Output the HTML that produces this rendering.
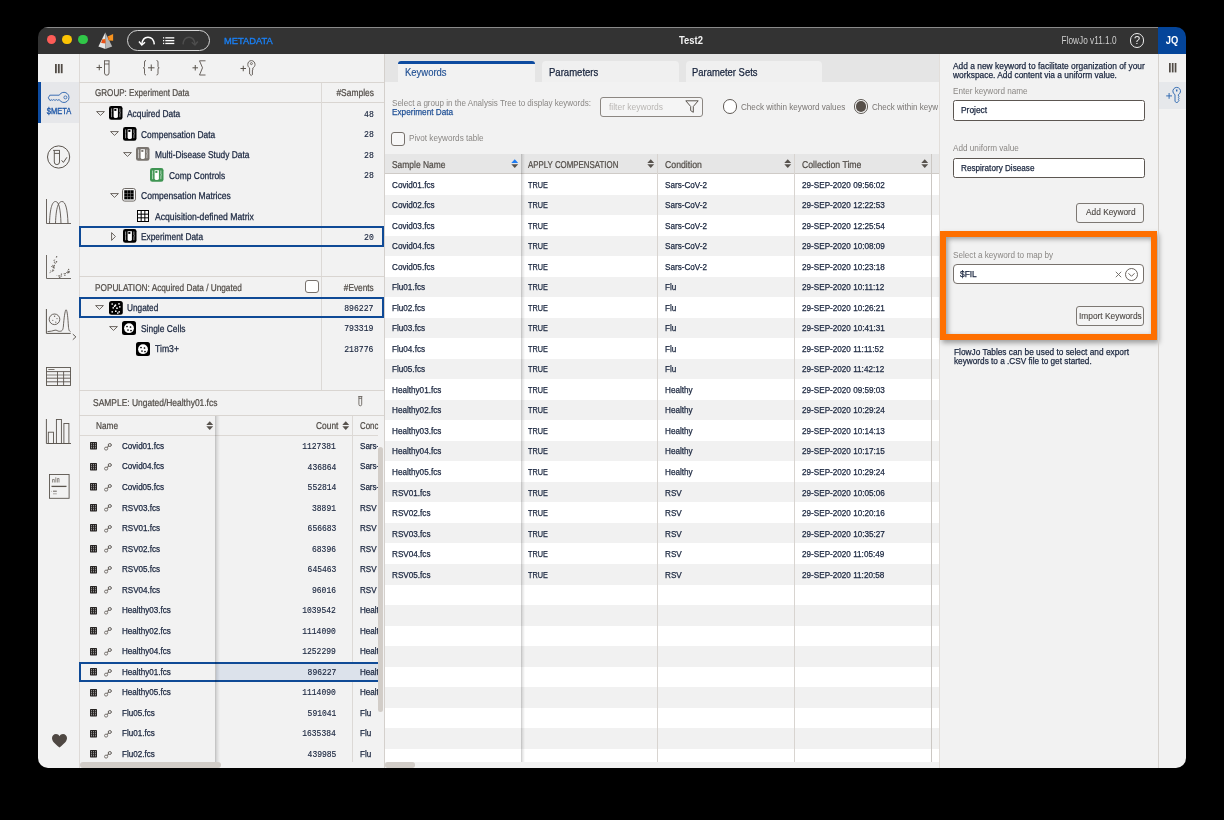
<!DOCTYPE html>
<html><head><meta charset="utf-8">
<style>
*{box-sizing:border-box;margin:0;padding:0}
html,body{width:1224px;height:820px;background:#000;overflow:hidden;font-family:"Liberation Sans",sans-serif}
.a{position:absolute}
.t{position:absolute;white-space:nowrap}
#win{position:absolute;left:0;top:0;width:1224px;height:820px;will-change:transform;clip-path:inset(27px 38px 52px 38px round 10px);background:#f2f2f2}
svg{position:absolute;overflow:visible}
</style></head><body>
<div id="win">

<div class="a" style="left:38.00px;top:27.00px;width:1148.00px;height:27.00px;background:#333333"></div>
<div class="a" style="left:38.00px;top:27.00px;width:1148.00px;height:0.70px;background:#8a8a8a"></div>
<div class="a" style="left:46.50px;top:34.60px;width:9.60px;height:9.60px;background:#fd5c57;border-radius:50%"></div>
<div class="a" style="left:62.20px;top:34.60px;width:9.60px;height:9.60px;background:#fbc404;border-radius:50%"></div>
<div class="a" style="left:78.00px;top:34.60px;width:9.60px;height:9.60px;background:#30c748;border-radius:50%"></div>
<svg style="left:97.00px;top:31.00px" width="18" height="19" viewBox="0 0 18 19"><polygon points="8.3,1.4 1.4,15.6 8.3,18.1" fill="#e6e6e6"/><polygon points="8.3,1.4 8.3,18.1 15.2,15.6" fill="#b5b5b5"/>
<polygon points="10.7,5.5 16.1,3 16.1,9.7 11.8,9.5" fill="#f7931e"/><polygon points="10.7,5.5 12.5,7 11.8,9.5" fill="#f25c05"/><polygon points="5.2,8.5 8.3,7.8 8.3,12.2 4.4,12" fill="#f36f0d"/><polygon points="5.2,8.5 8.3,9.8 8.3,12.2 4.4,12" fill="#e8501a"/></svg>
<div class="a" style="left:126.90px;top:29.80px;width:82.80px;height:21.20px;border:1.2px solid #d6d6d6;border-radius:10.6px"></div>
<svg style="left:138.00px;top:36.00px" width="18" height="10" viewBox="0 0 18 10"><path d="M3.8 8.5 C4.2 3.5 7 1.2 10 1.2 C13.2 1.2 15.8 3.5 16.3 8.3" fill="none" stroke="#fff" stroke-width="1.5"/><path d="M1 5.6 L3.8 9 L7 6.2" fill="none" stroke="#fff" stroke-width="1.5"/></svg>
<svg style="left:162.60px;top:37.00px" width="12" height="8" viewBox="0 0 12 8"><rect x="0" y="0.2" width="1.2" height="1.3" fill="#fff"/><rect x="2.3" y="0.2" width="9" height="1.3" fill="#fff"/><rect x="0" y="3.0" width="1.2" height="1.3" fill="#fff"/><rect x="2.3" y="3.0" width="9" height="1.3" fill="#fff"/><rect x="0" y="5.8" width="1.2" height="1.3" fill="#fff"/><rect x="2.3" y="5.8" width="9" height="1.3" fill="#fff"/></svg>
<svg style="left:182.30px;top:36.00px" width="17" height="10" viewBox="0 0 17 10"><path d="M1 8.3 C1.5 3.5 4 1.2 7 1.2 C10 1.2 12.6 3.5 13 8.5" fill="none" stroke="#4d4d4d" stroke-width="1.5"/><path d="M9.8 6.2 L13 9 L15.8 5.6" fill="none" stroke="#4d4d4d" stroke-width="1.5"/></svg>
<div class="t" id="a0" style="left:223.50px;top:35.97px;font-size:9.2px;line-height:10.58px;color:#1a7ff2;font-weight:normal;font-family:'Liberation Sans',sans-serif;transform:scale(1.0130,1);transform-origin:0 0;-webkit-text-stroke:0.35px #1a7ff2;">METADATA</div>
<div class="t" id="a1" style="left:679.10px;top:35.05px;font-size:10px;line-height:11.50px;color:#f2f2f2;font-weight:bold;font-family:'Liberation Sans',sans-serif;transform:scale(0.9399,1);transform-origin:0 0;">Test2</div>
<div class="t" id="a2" style="right:107.70px;top:35.15px;font-size:10px;line-height:11.50px;color:#cfcfcf;font-weight:normal;font-family:'Liberation Sans',sans-serif;transform:scale(0.8253,1);transform-origin:100% 0;">FlowJo v11.1.0</div>
<div class="a" style="left:1129.70px;top:33.10px;width:14.60px;height:14.60px;border:1.1px solid #eee;border-radius:50%"></div>
<div class="t" style="left:1137.00px;top:34.45px;font-size:11px;line-height:12.65px;color:#eee;font-weight:normal;font-family:'Liberation Sans',sans-serif;transform:translateX(-50%) scaleX(1);transform-origin:50% 0;">?</div>
<div class="a" style="left:1158.10px;top:27.00px;width:27.90px;height:26.80px;background:#04459a"></div>
<div class="t" id="a3" style="left:1171.90px;top:35.05px;font-size:10px;line-height:11.50px;color:#fff;font-weight:bold;font-family:'Liberation Sans',sans-serif;transform:translateX(-50%) scaleX(0.9338);transform-origin:50% 0;">JQ</div>
<div class="a" style="left:78.60px;top:54.00px;width:0.70px;height:714.00px;background:#dedad7"></div>
<svg style="left:54.80px;top:63.70px" width="8" height="10" viewBox="0 0 8 10"><rect x="0" y="0" width="1.8" height="9.2" fill="#514b45"/><rect x="2.9" y="0" width="1.8" height="9.2" fill="#514b45"/><rect x="5.8" y="0" width="1.8" height="9.2" fill="#514b45"/></svg>
<div class="a" style="left:38.00px;top:82.00px;width:40.50px;height:41.00px;background:#e6e7ea"></div>
<div class="a" style="left:38.00px;top:82.00px;width:3.00px;height:41.00px;background:#0d4ba0"></div>
<svg style="left:46.00px;top:90.00px" width="24" height="14" viewBox="0 0 24 14"><path d="M13.3 5.2 L3.8 5.2 L2.3 7.8 L3.8 10.3 L5 10.3 L5.8 9.6 L6.6 10.3 L7.4 9.6 L8.2 10.3 L9 9.6 L9.8 10.3 L10.6 9.6 L11.4 10.3 L13.3 9.6 A5.1 5.1 0 1 0 13.3 5.2 Z" fill="none" stroke="#2a62ad" stroke-width="0.9" stroke-linejoin="round"/><circle cx="19.4" cy="7.4" r="1.5" fill="none" stroke="#2a62ad" stroke-width="0.8"/></svg>
<div class="t" id="a4" style="left:58.75px;top:107.11px;font-size:8.5px;line-height:9.77px;color:#1d56a6;font-weight:normal;font-family:'Liberation Sans',sans-serif;transform:translateX(-50%) scaleX(0.8813);transform-origin:50% 0;-webkit-text-stroke:0.3px #1d56a6;">$META</div>
<svg style="left:46.00px;top:145.00px" width="25" height="25" viewBox="0 0 25 25"><circle cx="12.6" cy="12" r="11.1" fill="none" stroke="#5a544e" stroke-width="1"/><path d="M7.1 5.4 L13.9 5.4 M8.3 5.4 L8.3 17 Q8.3 19.6 10.9 19.6 Q13.5 19.6 13.5 17 L13.5 5.4 M8.3 8.4 L13.5 8.4" fill="none" stroke="#5a544e" stroke-width="0.95"/><path d="M15.6 15.3 L17.4 17.4 L20.9 12.3" fill="none" stroke="#5a544e" stroke-width="1"/></svg>
<svg style="left:46.00px;top:199.00px" width="26" height="26" viewBox="0 0 26 26"><path d="M0.5 0 L0.5 24.5 L25 24.5" fill="none" stroke="#5a544e" stroke-width="0.9"/><path d="M3.5 24.5 C4 8 6.5 2.5 9.5 2.5 C13 2.5 14.5 10 15 24.5" fill="none" stroke="#5a544e" stroke-width="0.9"/><path d="M9.5 24.5 C10 8 12.5 2.5 16 2.5 C19.5 2.5 21.5 10 22 24.5" fill="none" stroke="#5a544e" stroke-width="0.9"/></svg>
<svg style="left:46.00px;top:255.00px" width="26" height="25" viewBox="0 0 26 25"><path d="M0.5 0 L0.5 23.5 L25 23.5" fill="none" stroke="#6f6a65" stroke-width="1"/><circle cx="8.07" cy="5.22" r="0.56" fill="#6a645e"/><circle cx="7.01" cy="11.88" r="0.64" fill="#6a645e"/><circle cx="9.2" cy="8.4" r="0.51" fill="#6a645e"/><circle cx="4.29" cy="15.47" r="0.4" fill="#6a645e"/><circle cx="7.63" cy="11.26" r="0.61" fill="#6a645e"/><circle cx="8.16" cy="13.11" r="0.56" fill="#6a645e"/><circle cx="10.61" cy="6.78" r="0.52" fill="#6a645e"/><circle cx="7.49" cy="12.49" r="0.67" fill="#6a645e"/><circle cx="8.47" cy="7.19" r="0.68" fill="#6a645e"/><circle cx="5.91" cy="16.25" r="0.43" fill="#6a645e"/><circle cx="3.7" cy="17.87" r="0.46" fill="#6a645e"/><circle cx="6.81" cy="10.36" r="0.55" fill="#6a645e"/><circle cx="8.33" cy="10.45" r="0.68" fill="#6a645e"/><circle cx="7.08" cy="15.56" r="0.41" fill="#6a645e"/><circle cx="7.68" cy="15.32" r="0.55" fill="#6a645e"/><circle cx="6.83" cy="14.74" r="0.55" fill="#6a645e"/><circle cx="10.54" cy="6.81" r="0.7" fill="#6a645e"/><circle cx="10.13" cy="2.18" r="0.4" fill="#6a645e"/><circle cx="8.92" cy="4.74" r="0.37" fill="#6a645e"/><circle cx="8.45" cy="11.99" r="0.47" fill="#6a645e"/><circle cx="6.63" cy="15.92" r="0.7" fill="#6a645e"/><circle cx="9.79" cy="7.11" r="0.36" fill="#6a645e"/><circle cx="8.06" cy="5.36" r="0.4" fill="#6a645e"/><circle cx="10.65" cy="1.69" r="0.69" fill="#6a645e"/><circle cx="4.57" cy="16.91" r="0.53" fill="#6a645e"/><circle cx="5.7" cy="11.55" r="0.57" fill="#6a645e"/><circle cx="22.88" cy="16.28" r="0.6" fill="#6a645e"/><circle cx="13.89" cy="22.6" r="0.53" fill="#6a645e"/><circle cx="19.46" cy="18.56" r="0.55" fill="#6a645e"/><circle cx="10.92" cy="20.45" r="0.37" fill="#6a645e"/><circle cx="18.48" cy="18.37" r="0.47" fill="#6a645e"/><circle cx="20.68" cy="17.4" r="0.37" fill="#6a645e"/><circle cx="20.88" cy="17.61" r="0.51" fill="#6a645e"/><circle cx="18.88" cy="19.1" r="0.46" fill="#6a645e"/><circle cx="15.74" cy="18.99" r="0.48" fill="#6a645e"/><circle cx="22.56" cy="17.47" r="0.61" fill="#6a645e"/><circle cx="15.78" cy="21.57" r="0.43" fill="#6a645e"/><circle cx="12.8" cy="21.08" r="0.39" fill="#6a645e"/><circle cx="14.92" cy="21.37" r="0.5" fill="#6a645e"/><circle cx="22.97" cy="17.59" r="0.58" fill="#6a645e"/><circle cx="22.46" cy="16.85" r="0.39" fill="#6a645e"/><circle cx="18.91" cy="20.28" r="0.64" fill="#6a645e"/><circle cx="13.63" cy="22.28" r="0.57" fill="#6a645e"/><circle cx="21.74" cy="17.5" r="0.45" fill="#6a645e"/><circle cx="21.72" cy="18.05" r="0.5" fill="#6a645e"/><circle cx="15.44" cy="20.4" r="0.4" fill="#6a645e"/><circle cx="13.1" cy="20.76" r="0.7" fill="#6a645e"/><circle cx="18.89" cy="18.41" r="0.43" fill="#6a645e"/><circle cx="21.8" cy="16.14" r="0.53" fill="#6a645e"/><circle cx="14.95" cy="20.51" r="0.37" fill="#6a645e"/><circle cx="18.82" cy="20.04" r="0.37" fill="#6a645e"/><circle cx="22.62" cy="14.4" r="0.66" fill="#6a645e"/><circle cx="23.08" cy="16.48" r="0.61" fill="#6a645e"/><circle cx="13.37" cy="21.96" r="0.53" fill="#6a645e"/><circle cx="17.9" cy="18.71" r="0.47" fill="#6a645e"/><circle cx="15.37" cy="19.24" r="0.62" fill="#6a645e"/></svg>
<svg style="left:46.00px;top:309.00px" width="32" height="32" viewBox="0 0 32 32"><path d="M0.4 0 L0.4 24.4 L24.7 24.4" fill="none" stroke="#5a544e" stroke-width="1"/><circle cx="8.5" cy="10.3" r="5.3" fill="none" stroke="#5a544e" stroke-width="0.9"/><circle cx="8.6" cy="7.3" r="0.7" fill="#6a645e"/><circle cx="11" cy="9.6" r="0.6" fill="#6a645e"/><circle cx="6.8" cy="11.3" r="0.6" fill="#6a645e"/><circle cx="9.8" cy="13.2" r="0.6" fill="#6a645e"/><path d="M1.5 22.6 C4 22.4 7 22 9 21.2 C10.5 20.6 11.5 22.4 13.5 22.3 C16 22.2 17 21.5 17.4 17 C17.9 10 19 0.8 20.1 0.8 C21.2 0.8 22 10 22.4 17 C22.7 21 23.2 22.2 24.5 22.6" fill="none" stroke="#5a544e" stroke-width="0.9"/><path d="M26.8 25.1 L29.9 27.9 L26.8 30.7" fill="none" stroke="#5a544e" stroke-width="0.95"/></svg>
<svg style="left:46.00px;top:367.00px" width="25" height="19" viewBox="0 0 25 19"><rect x="0.5" y="0.5" width="24" height="18" fill="none" stroke="#5a544e" stroke-width="0.9"/><path d="M0.5 4.6 L24.5 4.6 M0.5 11.2 L24.5 11.2 M0.5 14.8 L24.5 14.8 M11.5 4.6 L11.5 18.5 M17.6 4.6 L17.6 18.5" stroke="#5a544e" stroke-width="0.9" fill="none"/><path d="M0.5 8 L24.5 8" stroke="#5a544e" stroke-width="0.7" fill="none"/><path d="M2.3 2.5 L8.5 2.5" stroke="#5a544e" stroke-width="0.8"/></svg>
<svg style="left:46.00px;top:419.00px" width="26" height="26" viewBox="0 0 26 26"><path d="M0.4 0 L0.4 24.5 L25 24.5" fill="none" stroke="#5a544e" stroke-width="0.95"/><rect x="2.3" y="13.2" width="5.2" height="11.3" fill="none" stroke="#5a544e" stroke-width="0.9"/><rect x="10.4" y="0.5" width="5" height="24" fill="none" stroke="#5a544e" stroke-width="0.9"/><rect x="17.9" y="4.5" width="5" height="20" fill="none" stroke="#5a544e" stroke-width="0.9"/></svg>
<svg style="left:48.50px;top:473.50px" width="21" height="25" viewBox="0 0 21 25"><rect x="0.5" y="0.5" width="19.6" height="23.8" fill="none" stroke="#5a544e" stroke-width="0.9"/><path d="M3.5 8.5 L3.5 5.5 L5.3 5.5 L5.3 8.5 M6.8 8.5 L6.8 3.3 M8.4 8.5 L8.4 4.5 L10 4.5 L10 8.5" stroke="#6a645e" stroke-width="0.7" fill="none"/><path d="M2.5 12.4 L17.5 12.4" stroke="#5a544e" stroke-width="1.3"/><path d="M4 17.2 L7.8 17.2" stroke="#5a544e" stroke-width="0.9"/><path d="M4 19.8 L7.8 19.8" stroke="#77716c" stroke-width="0.6"/><circle cx="2.6" cy="17.2" r="0.35" fill="#5a544e"/></svg>
<svg style="left:51.50px;top:734.00px" width="15" height="14" viewBox="0 0 15 14"><path d="M7.5 13.5 C2 9 0 7 0 4 C0 1.8 1.8 0 4 0 C5.6 0 6.8 0.9 7.5 2.2 C8.2 0.9 9.4 0 11 0 C13.2 0 15 1.8 15 4 C15 7 13 9 7.5 13.5 Z" fill="#4f4843"/></svg>
<svg style="left:96.00px;top:60.00px" width="15" height="16" viewBox="0 0 15 16"><path d="M0.5 7.5 L6 7.5 M3.25 4.75 L3.25 10.25" stroke="#5a544e" stroke-width="1"/><path d="M8 0.8 L13.5 0.8 M8.5 0.8 L8.5 13 Q8.5 15.2 10.75 15.2 Q13 15.2 13 13 L13 0.8 M8.5 4 L13 4" fill="none" stroke="#5a544e" stroke-width="0.9"/></svg>
<svg style="left:143.00px;top:60.00px" width="17" height="16" viewBox="0 0 17 16"><path d="M3 0.5 Q1.5 0.5 1.5 2 L1.5 6.5 Q1.5 7.8 0.3 7.8 Q1.5 7.8 1.5 9 L1.5 13.5 Q1.5 15 3 15" fill="none" stroke="#5a544e" stroke-width="0.9"/><path d="M13.5 0.5 Q15 0.5 15 2 L15 6.5 Q15 7.8 16.2 7.8 Q15 7.8 15 9 L15 13.5 Q15 15 13.5 15" fill="none" stroke="#5a544e" stroke-width="0.9"/><path d="M5 7.8 L11.5 7.8 M8.25 4.5 L8.25 11" stroke="#5a544e" stroke-width="1"/></svg>
<svg style="left:192.00px;top:60.00px" width="15" height="16" viewBox="0 0 15 16"><path d="M0.5 7.8 L6 7.8 M3.25 5 L3.25 10.5" stroke="#5a544e" stroke-width="1"/><path d="M13.5 0.8 L7.5 0.8 L10.5 7.8 L7.5 15 L13.5 15" fill="none" stroke="#5a544e" stroke-width="0.9"/></svg>
<svg style="left:240.00px;top:60.00px" width="16" height="16" viewBox="0 0 16 16"><path d="M0.5 8.5 L6 8.5 M3.25 5.75 L3.25 11.25" stroke="#5a544e" stroke-width="1"/><path d="M11.5 0.6 C9 0.6 7.8 2.5 7.8 4.5 C7.8 6.2 8.6 7.3 9.6 8 L9.6 14 L11.3 15.5 L12.8 14 L12 13 L12.8 12 L12 11 L12.8 10 L12.8 8 C14 7.3 15 6.2 15 4.5 C15 2.5 13.6 0.6 11.5 0.6 Z" fill="none" stroke="#5a544e" stroke-width="0.9"/><circle cx="11.4" cy="3.6" r="1" fill="none" stroke="#5a544e" stroke-width="0.8"/></svg>
<div class="a" style="left:79.30px;top:82.00px;width:305.10px;height:0.80px;background:#d9d5d1"></div>
<div class="t" id="a5" style="left:94.50px;top:88.14px;font-size:9.9px;line-height:11.38px;color:#4f4a45;font-weight:normal;font-family:'Liberation Sans',sans-serif;transform:scale(0.8173,1);transform-origin:0 0;-webkit-text-stroke:0.22px #4f4a45;text-rendering:geometricPrecision;">GROUP: Experiment Data</div>
<div class="t" id="a6" style="right:850.40px;top:88.14px;font-size:9.9px;line-height:11.38px;color:#4f4a45;font-weight:normal;font-family:'Liberation Sans',sans-serif;transform:scale(0.8541,1);transform-origin:100% 0;-webkit-text-stroke:0.22px #4f4a45;text-rendering:geometricPrecision;">#Samples</div>
<div class="a" style="left:79.30px;top:101.90px;width:305.10px;height:0.80px;background:#d9d5d1"></div>
<div class="a" style="left:321.00px;top:82.80px;width:0.80px;height:193.80px;background:#dcd9d6"></div>
<svg style="left:95.90px;top:110.60px" width="9" height="5" viewBox="0 0 9 5"><path d="M0.6 0.6 L8.4 0.6 L4.5 4.4 Z" fill="#f4f4f4" stroke="#5a544e" stroke-width="0.9" stroke-linejoin="round"/></svg>
<svg style="left:109.00px;top:106.30px" width="14" height="14" viewBox="0 0 14 14"><rect x="0" y="0" width="13.5" height="13.7" rx="2.3" fill="#000"/>
<path d="M4.6 2.2 L8.9 2.2 L8.9 10.5 Q8.9 12 6.75 12 Q4.6 12 4.6 10.5 Z" fill="#fff"/><rect x="5.3" y="3" width="2.1" height="1.9" fill="#000"/>
<path d="M2.6 2.5 L2.6 6.3 L2 6.85 L2.6 7.4 L2.6 11.2 M10.9 2.5 L10.9 6.3 L11.5 6.85 L10.9 7.4 L10.9 11.2" fill="none" stroke="#fff" stroke-width="0.6"/></svg>
<div class="t" id="a7" style="left:127.40px;top:109.24px;font-size:9.9px;line-height:11.38px;color:#18243d;font-weight:normal;font-family:'Liberation Sans',sans-serif;transform:scale(0.8503,1);transform-origin:0 0;-webkit-text-stroke:0.25px #18243d;text-rendering:geometricPrecision;">Acquired Data</div>
<svg style="left:109.60px;top:131.10px" width="9" height="5" viewBox="0 0 9 5"><path d="M0.6 0.6 L8.4 0.6 L4.5 4.4 Z" fill="#f4f4f4" stroke="#5a544e" stroke-width="0.9" stroke-linejoin="round"/></svg>
<svg style="left:122.60px;top:126.90px" width="14" height="14" viewBox="0 0 14 14"><rect x="0" y="0" width="13.5" height="13.7" rx="2.3" fill="#000"/>
<path d="M4.6 2.2 L8.9 2.2 L8.9 10.5 Q8.9 12 6.75 12 Q4.6 12 4.6 10.5 Z" fill="#fff"/><rect x="5.3" y="3" width="2.1" height="1.9" fill="#000"/>
<path d="M2.6 2.5 L2.6 6.3 L2 6.85 L2.6 7.4 L2.6 11.2 M10.9 2.5 L10.9 6.3 L11.5 6.85 L10.9 7.4 L10.9 11.2" fill="none" stroke="#fff" stroke-width="0.6"/></svg>
<div class="t" id="a8" style="left:141.20px;top:129.74px;font-size:9.9px;line-height:11.38px;color:#18243d;font-weight:normal;font-family:'Liberation Sans',sans-serif;transform:scale(0.8502,1);transform-origin:0 0;-webkit-text-stroke:0.25px #18243d;text-rendering:geometricPrecision;">Compensation Data</div>
<svg style="left:123.30px;top:151.60px" width="9" height="5" viewBox="0 0 9 5"><path d="M0.6 0.6 L8.4 0.6 L4.5 4.4 Z" fill="#f4f4f4" stroke="#5a544e" stroke-width="0.9" stroke-linejoin="round"/></svg>
<svg style="left:136.00px;top:147.40px" width="14" height="14" viewBox="0 0 14 14"><rect x="0" y="0" width="13.5" height="13.7" rx="2.3" fill="#7a7570"/>
<path d="M4.6 2.2 L8.9 2.2 L8.9 10.5 Q8.9 12 6.75 12 Q4.6 12 4.6 10.5 Z" fill="#fff"/><rect x="5.3" y="3" width="2.1" height="1.9" fill="#7a7570"/>
<path d="M2.6 2.5 L2.6 6.3 L2 6.85 L2.6 7.4 L2.6 11.2 M10.9 2.5 L10.9 6.3 L11.5 6.85 L10.9 7.4 L10.9 11.2" fill="none" stroke="#fff" stroke-width="0.6"/></svg>
<div class="t" id="a9" style="left:154.80px;top:150.24px;font-size:9.9px;line-height:11.38px;color:#18243d;font-weight:normal;font-family:'Liberation Sans',sans-serif;transform:scale(0.8473,1);transform-origin:0 0;-webkit-text-stroke:0.25px #18243d;text-rendering:geometricPrecision;">Multi-Disease Study Data</div>
<svg style="left:150.00px;top:168.00px" width="14" height="14" viewBox="0 0 14 14"><rect x="0" y="0" width="13.5" height="13.7" rx="2.3" fill="#3f9553"/>
<path d="M4.6 2.2 L8.9 2.2 L8.9 10.5 Q8.9 12 6.75 12 Q4.6 12 4.6 10.5 Z" fill="#fff"/><rect x="5.3" y="3" width="2.1" height="1.9" fill="#3f9553"/>
<path d="M2.6 2.5 L2.6 6.3 L2 6.85 L2.6 7.4 L2.6 11.2 M10.9 2.5 L10.9 6.3 L11.5 6.85 L10.9 7.4 L10.9 11.2" fill="none" stroke="#fff" stroke-width="0.6"/></svg>
<div class="t" id="a10" style="left:168.60px;top:170.74px;font-size:9.9px;line-height:11.38px;color:#18243d;font-weight:normal;font-family:'Liberation Sans',sans-serif;transform:scale(0.8535,1);transform-origin:0 0;-webkit-text-stroke:0.25px #18243d;text-rendering:geometricPrecision;">Comp Controls</div>
<svg style="left:109.60px;top:192.60px" width="9" height="5" viewBox="0 0 9 5"><path d="M0.6 0.6 L8.4 0.6 L4.5 4.4 Z" fill="#f4f4f4" stroke="#5a544e" stroke-width="0.9" stroke-linejoin="round"/></svg>
<svg style="left:122.00px;top:188.40px" width="14" height="14" viewBox="0 0 14 14"><rect x="0.5" y="0.5" width="13" height="12.6" rx="2.2" fill="#f7f7f7" stroke="#6f6a66" stroke-width="1"/><rect x="2.1" y="2.1" width="9.8" height="9.4" fill="#9a9a9a"/><rect x="2.40" y="2.40" width="2.75" height="2.65" fill="#000"/><rect x="5.55" y="2.40" width="2.75" height="2.65" fill="#000"/><rect x="8.70" y="2.40" width="2.75" height="2.65" fill="#000"/><rect x="2.40" y="5.45" width="2.75" height="2.65" fill="#000"/><rect x="5.55" y="5.45" width="2.75" height="2.65" fill="#000"/><rect x="8.70" y="5.45" width="2.75" height="2.65" fill="#000"/><rect x="2.40" y="8.50" width="2.75" height="2.65" fill="#000"/><rect x="5.55" y="8.50" width="2.75" height="2.65" fill="#000"/><rect x="8.70" y="8.50" width="2.75" height="2.65" fill="#000"/></svg>
<div class="t" id="a11" style="left:141.20px;top:191.24px;font-size:9.9px;line-height:11.38px;color:#18243d;font-weight:normal;font-family:'Liberation Sans',sans-serif;transform:scale(0.8659,1);transform-origin:0 0;-webkit-text-stroke:0.25px #18243d;text-rendering:geometricPrecision;">Compensation Matrices</div>
<svg style="left:137.00px;top:210.00px" width="12" height="12" viewBox="0 0 12 12"><rect x="0.5" y="0.5" width="11" height="11" fill="#fff" stroke="#000" stroke-width="1"/><path d="M4.17 0.5 L4.17 11.5 M7.83 0.5 L7.83 11.5 M0.5 4.17 L11.5 4.17 M0.5 7.83 L11.5 7.83" stroke="#000" stroke-width="1"/></svg>
<div class="t" id="a12" style="left:154.80px;top:211.74px;font-size:9.9px;line-height:11.38px;color:#18243d;font-weight:normal;font-family:'Liberation Sans',sans-serif;transform:scale(0.8739,1);transform-origin:0 0;-webkit-text-stroke:0.25px #18243d;text-rendering:geometricPrecision;">Acquisition-defined Matrix</div>
<svg style="left:110.90px;top:232.00px" width="5" height="9" viewBox="0 0 5 9"><path d="M0.6 0.6 L0.6 8.4 L4.4 4.5 Z" fill="#f4f4f4" stroke="#5a544e" stroke-width="0.9" stroke-linejoin="round"/></svg>
<svg style="left:122.60px;top:229.30px" width="14" height="14" viewBox="0 0 14 14"><rect x="0" y="0" width="13.5" height="13.7" rx="2.3" fill="#000"/>
<path d="M4.6 2.2 L8.9 2.2 L8.9 10.5 Q8.9 12 6.75 12 Q4.6 12 4.6 10.5 Z" fill="#fff"/><rect x="5.3" y="3" width="2.1" height="1.9" fill="#000"/>
<path d="M2.6 2.5 L2.6 6.3 L2 6.85 L2.6 7.4 L2.6 11.2 M10.9 2.5 L10.9 6.3 L11.5 6.85 L10.9 7.4 L10.9 11.2" fill="none" stroke="#fff" stroke-width="0.6"/></svg>
<div class="t" id="a13" style="left:141.20px;top:232.24px;font-size:9.9px;line-height:11.38px;color:#18243d;font-weight:normal;font-family:'Liberation Sans',sans-serif;transform:scale(0.8431,1);transform-origin:0 0;-webkit-text-stroke:0.25px #18243d;text-rendering:geometricPrecision;">Experiment Data</div>
<div class="t" style="right:850.70px;top:109.96px;font-size:9px;line-height:10.35px;color:#18243d;font-weight:normal;font-family:'Liberation Mono',monospace;transform:scale(0.9,1);transform-origin:100% 0;-webkit-text-stroke:0.15px #18243d;">48</div>
<div class="t" style="right:850.70px;top:130.45px;font-size:9px;line-height:10.35px;color:#18243d;font-weight:normal;font-family:'Liberation Mono',monospace;transform:scale(0.9,1);transform-origin:100% 0;-webkit-text-stroke:0.15px #18243d;">28</div>
<div class="t" style="right:850.70px;top:150.95px;font-size:9px;line-height:10.35px;color:#18243d;font-weight:normal;font-family:'Liberation Mono',monospace;transform:scale(0.9,1);transform-origin:100% 0;-webkit-text-stroke:0.15px #18243d;">28</div>
<div class="t" style="right:850.70px;top:171.45px;font-size:9px;line-height:10.35px;color:#18243d;font-weight:normal;font-family:'Liberation Mono',monospace;transform:scale(0.9,1);transform-origin:100% 0;-webkit-text-stroke:0.15px #18243d;">28</div>
<div class="t" style="right:850.70px;top:232.95px;font-size:9px;line-height:10.35px;color:#18243d;font-weight:normal;font-family:'Liberation Mono',monospace;transform:scale(0.9,1);transform-origin:100% 0;-webkit-text-stroke:0.15px #18243d;">20</div>
<div class="a" style="left:79.10px;top:226.00px;width:305.30px;height:20.90px;border:2px solid #0f4a96;border-left-width:2.7px"></div>
<div class="a" style="left:79.30px;top:276.30px;width:305.10px;height:0.80px;background:#d9d5d1"></div>
<div class="t" id="a14" style="left:94.80px;top:282.64px;font-size:9.9px;line-height:11.38px;color:#4f4a45;font-weight:normal;font-family:'Liberation Sans',sans-serif;transform:scale(0.8346,1);transform-origin:0 0;-webkit-text-stroke:0.22px #4f4a45;text-rendering:geometricPrecision;">POPULATION: Acquired Data / Ungated</div>
<div class="a" style="left:305.00px;top:280.30px;width:13.80px;height:13.20px;border:1px solid #77716c;border-radius:3px;background:#fff"></div>
<div class="t" id="a15" style="right:850.50px;top:282.64px;font-size:9.9px;line-height:11.38px;color:#4f4a45;font-weight:normal;font-family:'Liberation Sans',sans-serif;transform:scale(0.8379,1);transform-origin:100% 0;-webkit-text-stroke:0.22px #4f4a45;text-rendering:geometricPrecision;">#Events</div>
<div class="a" style="left:321.00px;top:277.00px;width:0.80px;height:113.60px;background:#dcd9d6"></div>
<div class="a" style="left:79.10px;top:297.40px;width:305.30px;height:20.90px;border:2px solid #0f4a96;border-left-width:2.7px"></div>
<svg style="left:95.00px;top:305.00px" width="9" height="5" viewBox="0 0 9 5"><path d="M0.6 0.6 L8.4 0.6 L4.5 4.4 Z" fill="#f4f4f4" stroke="#5a544e" stroke-width="0.9" stroke-linejoin="round"/></svg>
<svg style="left:108.80px;top:300.50px" width="14" height="14" viewBox="0 0 14 14"><rect x="0" y="0" width="13.8" height="13.8" rx="2.5" fill="#000"/><circle cx="3.2" cy="3" r="0.85" fill="#fff"/><circle cx="6.5" cy="4.2" r="0.85" fill="#fff"/><circle cx="10" cy="2.8" r="0.85" fill="#fff"/><circle cx="4.2" cy="6.8" r="0.85" fill="#fff"/><circle cx="8" cy="7.2" r="0.85" fill="#fff"/><circle cx="10.8" cy="5.8" r="0.85" fill="#fff"/><circle cx="3.2" cy="10.8" r="0.85" fill="#fff"/><circle cx="6.8" cy="10.2" r="0.85" fill="#fff"/><circle cx="10.2" cy="10.8" r="0.85" fill="#fff"/><circle cx="5.6" cy="5.2" r="0.85" fill="#fff"/><circle cx="8.8" cy="12" r="0.85" fill="#fff"/></svg>
<div class="t" id="a16" style="left:127.40px;top:303.04px;font-size:9.9px;line-height:11.38px;color:#18243d;font-weight:normal;font-family:'Liberation Sans',sans-serif;transform:scale(0.8382,1);transform-origin:0 0;-webkit-text-stroke:0.25px #18243d;text-rendering:geometricPrecision;">Ungated</div>
<svg style="left:109.00px;top:325.50px" width="9" height="5" viewBox="0 0 9 5"><path d="M0.6 0.6 L8.4 0.6 L4.5 4.4 Z" fill="#f4f4f4" stroke="#5a544e" stroke-width="0.9" stroke-linejoin="round"/></svg>
<svg style="left:122.00px;top:321.00px" width="14" height="14" viewBox="0 0 14 14"><rect x="0" y="0" width="14" height="14" rx="2.5" fill="#000"/><circle cx="7" cy="7.2" r="4.9" fill="#fff"/><circle cx="5" cy="5.5" r="0.85" fill="#000"/><circle cx="8.5" cy="6" r="0.85" fill="#000"/><circle cx="6" cy="9" r="0.85" fill="#000"/><circle cx="9" cy="9.5" r="0.85" fill="#000"/></svg>
<div class="t" id="a17" style="left:140.80px;top:323.54px;font-size:9.9px;line-height:11.38px;color:#18243d;font-weight:normal;font-family:'Liberation Sans',sans-serif;transform:scale(0.8534,1);transform-origin:0 0;-webkit-text-stroke:0.25px #18243d;text-rendering:geometricPrecision;">Single Cells</div>
<svg style="left:136.00px;top:341.50px" width="14" height="14" viewBox="0 0 14 14"><rect x="0" y="0" width="14" height="14" rx="2.5" fill="#000"/><circle cx="7" cy="7.2" r="4.9" fill="#fff"/><circle cx="5" cy="5.5" r="0.85" fill="#000"/><circle cx="8.5" cy="6" r="0.85" fill="#000"/><circle cx="6" cy="9" r="0.85" fill="#000"/><circle cx="9" cy="9.5" r="0.85" fill="#000"/></svg>
<div class="t" id="a18" style="left:155.00px;top:344.04px;font-size:9.9px;line-height:11.38px;color:#18243d;font-weight:normal;font-family:'Liberation Sans',sans-serif;transform:scale(0.8750,1);transform-origin:0 0;-webkit-text-stroke:0.25px #18243d;text-rendering:geometricPrecision;">Tim3+</div>
<div class="t" style="right:850.70px;top:303.75px;font-size:9px;line-height:10.35px;color:#18243d;font-weight:normal;font-family:'Liberation Mono',monospace;transform:scale(0.9,1);transform-origin:100% 0;-webkit-text-stroke:0.15px #18243d;">896227</div>
<div class="t" style="right:850.70px;top:324.25px;font-size:9px;line-height:10.35px;color:#18243d;font-weight:normal;font-family:'Liberation Mono',monospace;transform:scale(0.9,1);transform-origin:100% 0;-webkit-text-stroke:0.15px #18243d;">793319</div>
<div class="t" style="right:850.70px;top:344.75px;font-size:9px;line-height:10.35px;color:#18243d;font-weight:normal;font-family:'Liberation Mono',monospace;transform:scale(0.9,1);transform-origin:100% 0;-webkit-text-stroke:0.15px #18243d;">218776</div>
<div class="a" style="left:79.30px;top:389.90px;width:305.10px;height:0.80px;background:#d9d5d1"></div>
<div class="t" id="a19" style="left:93.10px;top:397.74px;font-size:9.9px;line-height:11.38px;color:#4f4a45;font-weight:normal;font-family:'Liberation Sans',sans-serif;transform:scale(0.8553,1);transform-origin:0 0;-webkit-text-stroke:0.22px #4f4a45;text-rendering:geometricPrecision;">SAMPLE: Ungated/Healthy01.fcs</div>
<svg style="left:357.60px;top:396.00px" width="5" height="11" viewBox="0 0 5 11"><path d="M0.3 0.5 L4.3 0.5 M0.9 0.5 L0.9 8.3 Q0.9 9.8 2.3 9.8 Q3.7 9.8 3.7 8.3 L3.7 0.5 M0.9 2.3 L3.7 2.3" fill="none" stroke="#5a544e" stroke-width="0.8"/></svg>
<div class="a" style="left:79.30px;top:414.60px;width:305.10px;height:0.80px;background:#d9d5d1"></div>
<div class="t" id="a20" style="left:95.70px;top:420.84px;font-size:9.9px;line-height:11.38px;color:#4f4a45;font-weight:normal;font-family:'Liberation Sans',sans-serif;transform:scale(0.8390,1);transform-origin:0 0;-webkit-text-stroke:0.22px #4f4a45;text-rendering:geometricPrecision;">Name</div>
<svg style="left:205.80px;top:420.90px" width="8" height="10" viewBox="0 0 8 10"><path d="M0.3 4 L3.75 0.2 L7.2 4 Z" fill="#57524d"/><path d="M0.3 5.3 L3.75 9.1 L7.2 5.3 Z" fill="#57524d"/></svg>
<div class="t" id="a21" style="right:885.40px;top:420.94px;font-size:9.9px;line-height:11.38px;color:#4f4a45;font-weight:normal;font-family:'Liberation Sans',sans-serif;transform:scale(0.8463,1);transform-origin:100% 0;-webkit-text-stroke:0.22px #4f4a45;text-rendering:geometricPrecision;">Count</div>
<svg style="left:341.80px;top:420.80px" width="8" height="10" viewBox="0 0 8 10"><path d="M0.3 4 L3.75 0.2 L7.2 4 Z" fill="#57524d"/><path d="M0.3 5.3 L3.75 9.1 L7.2 5.3 Z" fill="#57524d"/></svg>
<div class="t" style="left:360.00px;top:420.84px;font-size:9.9px;line-height:11.38px;color:#4f4a45;font-weight:normal;font-family:'Liberation Sans',sans-serif;transform:scale(0.8,1);transform-origin:0 0;-webkit-text-stroke:0.22px #4f4a45;text-rendering:geometricPrecision;width:22.5px;overflow:hidden;">Conc</div>
<div class="a" style="left:79.30px;top:435.10px;width:299.00px;height:0.80px;background:#dcd8d4"></div>
<div class="a" style="left:352.20px;top:416.00px;width:0.80px;height:346.00px;background:#dcd9d6"></div>
<div class="a" style="left:216.00px;top:661.82px;width:162.40px;height:20.00px;background:#dce2eb"></div>
<svg style="left:89.90px;top:442.40px" width="8" height="8" viewBox="0 0 8 8"><rect x="0" y="0" width="7" height="7.4" rx="0.6" fill="#262322"/><circle cx="1.45" cy="1.65" r="0.5" fill="#e8e8e8"/><circle cx="3.50" cy="1.65" r="0.5" fill="#e8e8e8"/><circle cx="5.55" cy="1.65" r="0.5" fill="#e8e8e8"/><circle cx="1.45" cy="3.70" r="0.5" fill="#e8e8e8"/><circle cx="3.50" cy="3.70" r="0.5" fill="#e8e8e8"/><circle cx="5.55" cy="3.70" r="0.5" fill="#e8e8e8"/><circle cx="1.45" cy="5.75" r="0.5" fill="#e8e8e8"/><circle cx="3.50" cy="5.75" r="0.5" fill="#e8e8e8"/><circle cx="5.55" cy="5.75" r="0.5" fill="#e8e8e8"/></svg>
<svg style="left:103.70px;top:442.80px" width="9" height="8" viewBox="0 0 9 8"><ellipse cx="2.1" cy="5.6" rx="1.6" ry="1.5" fill="none" stroke="#6f6a65" stroke-width="0.9"/><ellipse cx="5.8" cy="2.0" rx="1.6" ry="1.4" fill="none" stroke="#4f4a45" stroke-width="0.9"/><path d="M2.9 4.6 L4.9 2.9" stroke="#6f6a65" stroke-width="1.1"/></svg>
<div class="t" style="left:121.60px;top:440.96px;font-size:9px;line-height:10.35px;color:#18243d;font-weight:normal;font-family:'Liberation Sans',sans-serif;transform:scale(0.896,1);transform-origin:0 0;-webkit-text-stroke:0.25px #18243d;">Covid01.fcs</div>
<div class="t" style="right:888.10px;top:442.16px;font-size:9px;line-height:10.35px;color:#18243d;font-weight:normal;font-family:'Liberation Mono',monospace;transform:scale(0.889,1);transform-origin:100% 0;-webkit-text-stroke:0.15px #18243d;">1127381</div>
<div class="t" style="left:360.00px;top:440.96px;font-size:9px;line-height:10.35px;color:#18243d;font-weight:normal;font-family:'Liberation Sans',sans-serif;transform:scale(0.896,1);transform-origin:0 0;-webkit-text-stroke:0.25px #18243d;width:20px;overflow:hidden;">Sars-</div>
<svg style="left:89.90px;top:462.92px" width="8" height="8" viewBox="0 0 8 8"><rect x="0" y="0" width="7" height="7.4" rx="0.6" fill="#262322"/><circle cx="1.45" cy="1.65" r="0.5" fill="#e8e8e8"/><circle cx="3.50" cy="1.65" r="0.5" fill="#e8e8e8"/><circle cx="5.55" cy="1.65" r="0.5" fill="#e8e8e8"/><circle cx="1.45" cy="3.70" r="0.5" fill="#e8e8e8"/><circle cx="3.50" cy="3.70" r="0.5" fill="#e8e8e8"/><circle cx="5.55" cy="3.70" r="0.5" fill="#e8e8e8"/><circle cx="1.45" cy="5.75" r="0.5" fill="#e8e8e8"/><circle cx="3.50" cy="5.75" r="0.5" fill="#e8e8e8"/><circle cx="5.55" cy="5.75" r="0.5" fill="#e8e8e8"/></svg>
<svg style="left:103.70px;top:463.32px" width="9" height="8" viewBox="0 0 9 8"><ellipse cx="2.1" cy="5.6" rx="1.6" ry="1.5" fill="none" stroke="#6f6a65" stroke-width="0.9"/><ellipse cx="5.8" cy="2.0" rx="1.6" ry="1.4" fill="none" stroke="#4f4a45" stroke-width="0.9"/><path d="M2.9 4.6 L4.9 2.9" stroke="#6f6a65" stroke-width="1.1"/></svg>
<div class="t" style="left:121.60px;top:461.48px;font-size:9px;line-height:10.35px;color:#18243d;font-weight:normal;font-family:'Liberation Sans',sans-serif;transform:scale(0.896,1);transform-origin:0 0;-webkit-text-stroke:0.25px #18243d;">Covid04.fcs</div>
<div class="t" style="right:888.10px;top:462.68px;font-size:9px;line-height:10.35px;color:#18243d;font-weight:normal;font-family:'Liberation Mono',monospace;transform:scale(0.889,1);transform-origin:100% 0;-webkit-text-stroke:0.15px #18243d;">436864</div>
<div class="t" style="left:360.00px;top:461.48px;font-size:9px;line-height:10.35px;color:#18243d;font-weight:normal;font-family:'Liberation Sans',sans-serif;transform:scale(0.896,1);transform-origin:0 0;-webkit-text-stroke:0.25px #18243d;width:20px;overflow:hidden;">Sars-</div>
<svg style="left:89.90px;top:483.44px" width="8" height="8" viewBox="0 0 8 8"><rect x="0" y="0" width="7" height="7.4" rx="0.6" fill="#262322"/><circle cx="1.45" cy="1.65" r="0.5" fill="#e8e8e8"/><circle cx="3.50" cy="1.65" r="0.5" fill="#e8e8e8"/><circle cx="5.55" cy="1.65" r="0.5" fill="#e8e8e8"/><circle cx="1.45" cy="3.70" r="0.5" fill="#e8e8e8"/><circle cx="3.50" cy="3.70" r="0.5" fill="#e8e8e8"/><circle cx="5.55" cy="3.70" r="0.5" fill="#e8e8e8"/><circle cx="1.45" cy="5.75" r="0.5" fill="#e8e8e8"/><circle cx="3.50" cy="5.75" r="0.5" fill="#e8e8e8"/><circle cx="5.55" cy="5.75" r="0.5" fill="#e8e8e8"/></svg>
<svg style="left:103.70px;top:483.84px" width="9" height="8" viewBox="0 0 9 8"><ellipse cx="2.1" cy="5.6" rx="1.6" ry="1.5" fill="none" stroke="#6f6a65" stroke-width="0.9"/><ellipse cx="5.8" cy="2.0" rx="1.6" ry="1.4" fill="none" stroke="#4f4a45" stroke-width="0.9"/><path d="M2.9 4.6 L4.9 2.9" stroke="#6f6a65" stroke-width="1.1"/></svg>
<div class="t" style="left:121.60px;top:482.00px;font-size:9px;line-height:10.35px;color:#18243d;font-weight:normal;font-family:'Liberation Sans',sans-serif;transform:scale(0.896,1);transform-origin:0 0;-webkit-text-stroke:0.25px #18243d;">Covid05.fcs</div>
<div class="t" style="right:888.10px;top:483.20px;font-size:9px;line-height:10.35px;color:#18243d;font-weight:normal;font-family:'Liberation Mono',monospace;transform:scale(0.889,1);transform-origin:100% 0;-webkit-text-stroke:0.15px #18243d;">552814</div>
<div class="t" style="left:360.00px;top:482.00px;font-size:9px;line-height:10.35px;color:#18243d;font-weight:normal;font-family:'Liberation Sans',sans-serif;transform:scale(0.896,1);transform-origin:0 0;-webkit-text-stroke:0.25px #18243d;width:20px;overflow:hidden;">Sars-</div>
<svg style="left:89.90px;top:503.96px" width="8" height="8" viewBox="0 0 8 8"><rect x="0" y="0" width="7" height="7.4" rx="0.6" fill="#262322"/><circle cx="1.45" cy="1.65" r="0.5" fill="#e8e8e8"/><circle cx="3.50" cy="1.65" r="0.5" fill="#e8e8e8"/><circle cx="5.55" cy="1.65" r="0.5" fill="#e8e8e8"/><circle cx="1.45" cy="3.70" r="0.5" fill="#e8e8e8"/><circle cx="3.50" cy="3.70" r="0.5" fill="#e8e8e8"/><circle cx="5.55" cy="3.70" r="0.5" fill="#e8e8e8"/><circle cx="1.45" cy="5.75" r="0.5" fill="#e8e8e8"/><circle cx="3.50" cy="5.75" r="0.5" fill="#e8e8e8"/><circle cx="5.55" cy="5.75" r="0.5" fill="#e8e8e8"/></svg>
<svg style="left:103.70px;top:504.36px" width="9" height="8" viewBox="0 0 9 8"><ellipse cx="2.1" cy="5.6" rx="1.6" ry="1.5" fill="none" stroke="#6f6a65" stroke-width="0.9"/><ellipse cx="5.8" cy="2.0" rx="1.6" ry="1.4" fill="none" stroke="#4f4a45" stroke-width="0.9"/><path d="M2.9 4.6 L4.9 2.9" stroke="#6f6a65" stroke-width="1.1"/></svg>
<div class="t" style="left:121.60px;top:502.52px;font-size:9px;line-height:10.35px;color:#18243d;font-weight:normal;font-family:'Liberation Sans',sans-serif;transform:scale(0.896,1);transform-origin:0 0;-webkit-text-stroke:0.25px #18243d;">RSV03.fcs</div>
<div class="t" style="right:888.10px;top:503.72px;font-size:9px;line-height:10.35px;color:#18243d;font-weight:normal;font-family:'Liberation Mono',monospace;transform:scale(0.889,1);transform-origin:100% 0;-webkit-text-stroke:0.15px #18243d;">38891</div>
<div class="t" style="left:360.00px;top:502.52px;font-size:9px;line-height:10.35px;color:#18243d;font-weight:normal;font-family:'Liberation Sans',sans-serif;transform:scale(0.896,1);transform-origin:0 0;-webkit-text-stroke:0.25px #18243d;width:20px;overflow:hidden;">RSV</div>
<svg style="left:89.90px;top:524.48px" width="8" height="8" viewBox="0 0 8 8"><rect x="0" y="0" width="7" height="7.4" rx="0.6" fill="#262322"/><circle cx="1.45" cy="1.65" r="0.5" fill="#e8e8e8"/><circle cx="3.50" cy="1.65" r="0.5" fill="#e8e8e8"/><circle cx="5.55" cy="1.65" r="0.5" fill="#e8e8e8"/><circle cx="1.45" cy="3.70" r="0.5" fill="#e8e8e8"/><circle cx="3.50" cy="3.70" r="0.5" fill="#e8e8e8"/><circle cx="5.55" cy="3.70" r="0.5" fill="#e8e8e8"/><circle cx="1.45" cy="5.75" r="0.5" fill="#e8e8e8"/><circle cx="3.50" cy="5.75" r="0.5" fill="#e8e8e8"/><circle cx="5.55" cy="5.75" r="0.5" fill="#e8e8e8"/></svg>
<svg style="left:103.70px;top:524.88px" width="9" height="8" viewBox="0 0 9 8"><ellipse cx="2.1" cy="5.6" rx="1.6" ry="1.5" fill="none" stroke="#6f6a65" stroke-width="0.9"/><ellipse cx="5.8" cy="2.0" rx="1.6" ry="1.4" fill="none" stroke="#4f4a45" stroke-width="0.9"/><path d="M2.9 4.6 L4.9 2.9" stroke="#6f6a65" stroke-width="1.1"/></svg>
<div class="t" style="left:121.60px;top:523.04px;font-size:9px;line-height:10.35px;color:#18243d;font-weight:normal;font-family:'Liberation Sans',sans-serif;transform:scale(0.896,1);transform-origin:0 0;-webkit-text-stroke:0.25px #18243d;">RSV01.fcs</div>
<div class="t" style="right:888.10px;top:524.24px;font-size:9px;line-height:10.35px;color:#18243d;font-weight:normal;font-family:'Liberation Mono',monospace;transform:scale(0.889,1);transform-origin:100% 0;-webkit-text-stroke:0.15px #18243d;">656683</div>
<div class="t" style="left:360.00px;top:523.04px;font-size:9px;line-height:10.35px;color:#18243d;font-weight:normal;font-family:'Liberation Sans',sans-serif;transform:scale(0.896,1);transform-origin:0 0;-webkit-text-stroke:0.25px #18243d;width:20px;overflow:hidden;">RSV</div>
<svg style="left:89.90px;top:545.00px" width="8" height="8" viewBox="0 0 8 8"><rect x="0" y="0" width="7" height="7.4" rx="0.6" fill="#262322"/><circle cx="1.45" cy="1.65" r="0.5" fill="#e8e8e8"/><circle cx="3.50" cy="1.65" r="0.5" fill="#e8e8e8"/><circle cx="5.55" cy="1.65" r="0.5" fill="#e8e8e8"/><circle cx="1.45" cy="3.70" r="0.5" fill="#e8e8e8"/><circle cx="3.50" cy="3.70" r="0.5" fill="#e8e8e8"/><circle cx="5.55" cy="3.70" r="0.5" fill="#e8e8e8"/><circle cx="1.45" cy="5.75" r="0.5" fill="#e8e8e8"/><circle cx="3.50" cy="5.75" r="0.5" fill="#e8e8e8"/><circle cx="5.55" cy="5.75" r="0.5" fill="#e8e8e8"/></svg>
<svg style="left:103.70px;top:545.40px" width="9" height="8" viewBox="0 0 9 8"><ellipse cx="2.1" cy="5.6" rx="1.6" ry="1.5" fill="none" stroke="#6f6a65" stroke-width="0.9"/><ellipse cx="5.8" cy="2.0" rx="1.6" ry="1.4" fill="none" stroke="#4f4a45" stroke-width="0.9"/><path d="M2.9 4.6 L4.9 2.9" stroke="#6f6a65" stroke-width="1.1"/></svg>
<div class="t" style="left:121.60px;top:543.56px;font-size:9px;line-height:10.35px;color:#18243d;font-weight:normal;font-family:'Liberation Sans',sans-serif;transform:scale(0.896,1);transform-origin:0 0;-webkit-text-stroke:0.25px #18243d;">RSV02.fcs</div>
<div class="t" style="right:888.10px;top:544.76px;font-size:9px;line-height:10.35px;color:#18243d;font-weight:normal;font-family:'Liberation Mono',monospace;transform:scale(0.889,1);transform-origin:100% 0;-webkit-text-stroke:0.15px #18243d;">68396</div>
<div class="t" style="left:360.00px;top:543.56px;font-size:9px;line-height:10.35px;color:#18243d;font-weight:normal;font-family:'Liberation Sans',sans-serif;transform:scale(0.896,1);transform-origin:0 0;-webkit-text-stroke:0.25px #18243d;width:20px;overflow:hidden;">RSV</div>
<svg style="left:89.90px;top:565.52px" width="8" height="8" viewBox="0 0 8 8"><rect x="0" y="0" width="7" height="7.4" rx="0.6" fill="#262322"/><circle cx="1.45" cy="1.65" r="0.5" fill="#e8e8e8"/><circle cx="3.50" cy="1.65" r="0.5" fill="#e8e8e8"/><circle cx="5.55" cy="1.65" r="0.5" fill="#e8e8e8"/><circle cx="1.45" cy="3.70" r="0.5" fill="#e8e8e8"/><circle cx="3.50" cy="3.70" r="0.5" fill="#e8e8e8"/><circle cx="5.55" cy="3.70" r="0.5" fill="#e8e8e8"/><circle cx="1.45" cy="5.75" r="0.5" fill="#e8e8e8"/><circle cx="3.50" cy="5.75" r="0.5" fill="#e8e8e8"/><circle cx="5.55" cy="5.75" r="0.5" fill="#e8e8e8"/></svg>
<svg style="left:103.70px;top:565.92px" width="9" height="8" viewBox="0 0 9 8"><ellipse cx="2.1" cy="5.6" rx="1.6" ry="1.5" fill="none" stroke="#6f6a65" stroke-width="0.9"/><ellipse cx="5.8" cy="2.0" rx="1.6" ry="1.4" fill="none" stroke="#4f4a45" stroke-width="0.9"/><path d="M2.9 4.6 L4.9 2.9" stroke="#6f6a65" stroke-width="1.1"/></svg>
<div class="t" style="left:121.60px;top:564.08px;font-size:9px;line-height:10.35px;color:#18243d;font-weight:normal;font-family:'Liberation Sans',sans-serif;transform:scale(0.896,1);transform-origin:0 0;-webkit-text-stroke:0.25px #18243d;">RSV05.fcs</div>
<div class="t" style="right:888.10px;top:565.28px;font-size:9px;line-height:10.35px;color:#18243d;font-weight:normal;font-family:'Liberation Mono',monospace;transform:scale(0.889,1);transform-origin:100% 0;-webkit-text-stroke:0.15px #18243d;">645463</div>
<div class="t" style="left:360.00px;top:564.08px;font-size:9px;line-height:10.35px;color:#18243d;font-weight:normal;font-family:'Liberation Sans',sans-serif;transform:scale(0.896,1);transform-origin:0 0;-webkit-text-stroke:0.25px #18243d;width:20px;overflow:hidden;">RSV</div>
<svg style="left:89.90px;top:586.04px" width="8" height="8" viewBox="0 0 8 8"><rect x="0" y="0" width="7" height="7.4" rx="0.6" fill="#262322"/><circle cx="1.45" cy="1.65" r="0.5" fill="#e8e8e8"/><circle cx="3.50" cy="1.65" r="0.5" fill="#e8e8e8"/><circle cx="5.55" cy="1.65" r="0.5" fill="#e8e8e8"/><circle cx="1.45" cy="3.70" r="0.5" fill="#e8e8e8"/><circle cx="3.50" cy="3.70" r="0.5" fill="#e8e8e8"/><circle cx="5.55" cy="3.70" r="0.5" fill="#e8e8e8"/><circle cx="1.45" cy="5.75" r="0.5" fill="#e8e8e8"/><circle cx="3.50" cy="5.75" r="0.5" fill="#e8e8e8"/><circle cx="5.55" cy="5.75" r="0.5" fill="#e8e8e8"/></svg>
<svg style="left:103.70px;top:586.44px" width="9" height="8" viewBox="0 0 9 8"><ellipse cx="2.1" cy="5.6" rx="1.6" ry="1.5" fill="none" stroke="#6f6a65" stroke-width="0.9"/><ellipse cx="5.8" cy="2.0" rx="1.6" ry="1.4" fill="none" stroke="#4f4a45" stroke-width="0.9"/><path d="M2.9 4.6 L4.9 2.9" stroke="#6f6a65" stroke-width="1.1"/></svg>
<div class="t" style="left:121.60px;top:584.60px;font-size:9px;line-height:10.35px;color:#18243d;font-weight:normal;font-family:'Liberation Sans',sans-serif;transform:scale(0.896,1);transform-origin:0 0;-webkit-text-stroke:0.25px #18243d;">RSV04.fcs</div>
<div class="t" style="right:888.10px;top:585.80px;font-size:9px;line-height:10.35px;color:#18243d;font-weight:normal;font-family:'Liberation Mono',monospace;transform:scale(0.889,1);transform-origin:100% 0;-webkit-text-stroke:0.15px #18243d;">96016</div>
<div class="t" style="left:360.00px;top:584.60px;font-size:9px;line-height:10.35px;color:#18243d;font-weight:normal;font-family:'Liberation Sans',sans-serif;transform:scale(0.896,1);transform-origin:0 0;-webkit-text-stroke:0.25px #18243d;width:20px;overflow:hidden;">RSV</div>
<svg style="left:89.90px;top:606.56px" width="8" height="8" viewBox="0 0 8 8"><rect x="0" y="0" width="7" height="7.4" rx="0.6" fill="#262322"/><circle cx="1.45" cy="1.65" r="0.5" fill="#e8e8e8"/><circle cx="3.50" cy="1.65" r="0.5" fill="#e8e8e8"/><circle cx="5.55" cy="1.65" r="0.5" fill="#e8e8e8"/><circle cx="1.45" cy="3.70" r="0.5" fill="#e8e8e8"/><circle cx="3.50" cy="3.70" r="0.5" fill="#e8e8e8"/><circle cx="5.55" cy="3.70" r="0.5" fill="#e8e8e8"/><circle cx="1.45" cy="5.75" r="0.5" fill="#e8e8e8"/><circle cx="3.50" cy="5.75" r="0.5" fill="#e8e8e8"/><circle cx="5.55" cy="5.75" r="0.5" fill="#e8e8e8"/></svg>
<svg style="left:103.70px;top:606.96px" width="9" height="8" viewBox="0 0 9 8"><ellipse cx="2.1" cy="5.6" rx="1.6" ry="1.5" fill="none" stroke="#6f6a65" stroke-width="0.9"/><ellipse cx="5.8" cy="2.0" rx="1.6" ry="1.4" fill="none" stroke="#4f4a45" stroke-width="0.9"/><path d="M2.9 4.6 L4.9 2.9" stroke="#6f6a65" stroke-width="1.1"/></svg>
<div class="t" style="left:121.60px;top:605.12px;font-size:9px;line-height:10.35px;color:#18243d;font-weight:normal;font-family:'Liberation Sans',sans-serif;transform:scale(0.896,1);transform-origin:0 0;-webkit-text-stroke:0.25px #18243d;">Healthy03.fcs</div>
<div class="t" style="right:888.10px;top:606.32px;font-size:9px;line-height:10.35px;color:#18243d;font-weight:normal;font-family:'Liberation Mono',monospace;transform:scale(0.889,1);transform-origin:100% 0;-webkit-text-stroke:0.15px #18243d;">1039542</div>
<div class="t" style="left:360.00px;top:605.12px;font-size:9px;line-height:10.35px;color:#18243d;font-weight:normal;font-family:'Liberation Sans',sans-serif;transform:scale(0.896,1);transform-origin:0 0;-webkit-text-stroke:0.25px #18243d;width:20px;overflow:hidden;">Healt</div>
<svg style="left:89.90px;top:627.08px" width="8" height="8" viewBox="0 0 8 8"><rect x="0" y="0" width="7" height="7.4" rx="0.6" fill="#262322"/><circle cx="1.45" cy="1.65" r="0.5" fill="#e8e8e8"/><circle cx="3.50" cy="1.65" r="0.5" fill="#e8e8e8"/><circle cx="5.55" cy="1.65" r="0.5" fill="#e8e8e8"/><circle cx="1.45" cy="3.70" r="0.5" fill="#e8e8e8"/><circle cx="3.50" cy="3.70" r="0.5" fill="#e8e8e8"/><circle cx="5.55" cy="3.70" r="0.5" fill="#e8e8e8"/><circle cx="1.45" cy="5.75" r="0.5" fill="#e8e8e8"/><circle cx="3.50" cy="5.75" r="0.5" fill="#e8e8e8"/><circle cx="5.55" cy="5.75" r="0.5" fill="#e8e8e8"/></svg>
<svg style="left:103.70px;top:627.48px" width="9" height="8" viewBox="0 0 9 8"><ellipse cx="2.1" cy="5.6" rx="1.6" ry="1.5" fill="none" stroke="#6f6a65" stroke-width="0.9"/><ellipse cx="5.8" cy="2.0" rx="1.6" ry="1.4" fill="none" stroke="#4f4a45" stroke-width="0.9"/><path d="M2.9 4.6 L4.9 2.9" stroke="#6f6a65" stroke-width="1.1"/></svg>
<div class="t" style="left:121.60px;top:625.63px;font-size:9px;line-height:10.35px;color:#18243d;font-weight:normal;font-family:'Liberation Sans',sans-serif;transform:scale(0.896,1);transform-origin:0 0;-webkit-text-stroke:0.25px #18243d;">Healthy02.fcs</div>
<div class="t" style="right:888.10px;top:626.84px;font-size:9px;line-height:10.35px;color:#18243d;font-weight:normal;font-family:'Liberation Mono',monospace;transform:scale(0.889,1);transform-origin:100% 0;-webkit-text-stroke:0.15px #18243d;">1114090</div>
<div class="t" style="left:360.00px;top:625.63px;font-size:9px;line-height:10.35px;color:#18243d;font-weight:normal;font-family:'Liberation Sans',sans-serif;transform:scale(0.896,1);transform-origin:0 0;-webkit-text-stroke:0.25px #18243d;width:20px;overflow:hidden;">Healt</div>
<svg style="left:89.90px;top:647.60px" width="8" height="8" viewBox="0 0 8 8"><rect x="0" y="0" width="7" height="7.4" rx="0.6" fill="#262322"/><circle cx="1.45" cy="1.65" r="0.5" fill="#e8e8e8"/><circle cx="3.50" cy="1.65" r="0.5" fill="#e8e8e8"/><circle cx="5.55" cy="1.65" r="0.5" fill="#e8e8e8"/><circle cx="1.45" cy="3.70" r="0.5" fill="#e8e8e8"/><circle cx="3.50" cy="3.70" r="0.5" fill="#e8e8e8"/><circle cx="5.55" cy="3.70" r="0.5" fill="#e8e8e8"/><circle cx="1.45" cy="5.75" r="0.5" fill="#e8e8e8"/><circle cx="3.50" cy="5.75" r="0.5" fill="#e8e8e8"/><circle cx="5.55" cy="5.75" r="0.5" fill="#e8e8e8"/></svg>
<svg style="left:103.70px;top:648.00px" width="9" height="8" viewBox="0 0 9 8"><ellipse cx="2.1" cy="5.6" rx="1.6" ry="1.5" fill="none" stroke="#6f6a65" stroke-width="0.9"/><ellipse cx="5.8" cy="2.0" rx="1.6" ry="1.4" fill="none" stroke="#4f4a45" stroke-width="0.9"/><path d="M2.9 4.6 L4.9 2.9" stroke="#6f6a65" stroke-width="1.1"/></svg>
<div class="t" style="left:121.60px;top:646.15px;font-size:9px;line-height:10.35px;color:#18243d;font-weight:normal;font-family:'Liberation Sans',sans-serif;transform:scale(0.896,1);transform-origin:0 0;-webkit-text-stroke:0.25px #18243d;">Healthy04.fcs</div>
<div class="t" style="right:888.10px;top:647.36px;font-size:9px;line-height:10.35px;color:#18243d;font-weight:normal;font-family:'Liberation Mono',monospace;transform:scale(0.889,1);transform-origin:100% 0;-webkit-text-stroke:0.15px #18243d;">1252299</div>
<div class="t" style="left:360.00px;top:646.15px;font-size:9px;line-height:10.35px;color:#18243d;font-weight:normal;font-family:'Liberation Sans',sans-serif;transform:scale(0.896,1);transform-origin:0 0;-webkit-text-stroke:0.25px #18243d;width:20px;overflow:hidden;">Healt</div>
<svg style="left:89.90px;top:668.12px" width="8" height="8" viewBox="0 0 8 8"><rect x="0" y="0" width="7" height="7.4" rx="0.6" fill="#262322"/><circle cx="1.45" cy="1.65" r="0.5" fill="#e8e8e8"/><circle cx="3.50" cy="1.65" r="0.5" fill="#e8e8e8"/><circle cx="5.55" cy="1.65" r="0.5" fill="#e8e8e8"/><circle cx="1.45" cy="3.70" r="0.5" fill="#e8e8e8"/><circle cx="3.50" cy="3.70" r="0.5" fill="#e8e8e8"/><circle cx="5.55" cy="3.70" r="0.5" fill="#e8e8e8"/><circle cx="1.45" cy="5.75" r="0.5" fill="#e8e8e8"/><circle cx="3.50" cy="5.75" r="0.5" fill="#e8e8e8"/><circle cx="5.55" cy="5.75" r="0.5" fill="#e8e8e8"/></svg>
<svg style="left:103.70px;top:668.52px" width="9" height="8" viewBox="0 0 9 8"><ellipse cx="2.1" cy="5.6" rx="1.6" ry="1.5" fill="none" stroke="#6f6a65" stroke-width="0.9"/><ellipse cx="5.8" cy="2.0" rx="1.6" ry="1.4" fill="none" stroke="#4f4a45" stroke-width="0.9"/><path d="M2.9 4.6 L4.9 2.9" stroke="#6f6a65" stroke-width="1.1"/></svg>
<div class="t" style="left:121.60px;top:666.68px;font-size:9px;line-height:10.35px;color:#18243d;font-weight:normal;font-family:'Liberation Sans',sans-serif;transform:scale(0.896,1);transform-origin:0 0;-webkit-text-stroke:0.25px #18243d;">Healthy01.fcs</div>
<div class="t" style="right:888.10px;top:667.88px;font-size:9px;line-height:10.35px;color:#18243d;font-weight:normal;font-family:'Liberation Mono',monospace;transform:scale(0.889,1);transform-origin:100% 0;-webkit-text-stroke:0.15px #18243d;">896227</div>
<div class="t" style="left:360.00px;top:666.68px;font-size:9px;line-height:10.35px;color:#18243d;font-weight:normal;font-family:'Liberation Sans',sans-serif;transform:scale(0.896,1);transform-origin:0 0;-webkit-text-stroke:0.25px #18243d;width:20px;overflow:hidden;">Healt</div>
<svg style="left:89.90px;top:688.64px" width="8" height="8" viewBox="0 0 8 8"><rect x="0" y="0" width="7" height="7.4" rx="0.6" fill="#262322"/><circle cx="1.45" cy="1.65" r="0.5" fill="#e8e8e8"/><circle cx="3.50" cy="1.65" r="0.5" fill="#e8e8e8"/><circle cx="5.55" cy="1.65" r="0.5" fill="#e8e8e8"/><circle cx="1.45" cy="3.70" r="0.5" fill="#e8e8e8"/><circle cx="3.50" cy="3.70" r="0.5" fill="#e8e8e8"/><circle cx="5.55" cy="3.70" r="0.5" fill="#e8e8e8"/><circle cx="1.45" cy="5.75" r="0.5" fill="#e8e8e8"/><circle cx="3.50" cy="5.75" r="0.5" fill="#e8e8e8"/><circle cx="5.55" cy="5.75" r="0.5" fill="#e8e8e8"/></svg>
<svg style="left:103.70px;top:689.04px" width="9" height="8" viewBox="0 0 9 8"><ellipse cx="2.1" cy="5.6" rx="1.6" ry="1.5" fill="none" stroke="#6f6a65" stroke-width="0.9"/><ellipse cx="5.8" cy="2.0" rx="1.6" ry="1.4" fill="none" stroke="#4f4a45" stroke-width="0.9"/><path d="M2.9 4.6 L4.9 2.9" stroke="#6f6a65" stroke-width="1.1"/></svg>
<div class="t" style="left:121.60px;top:687.20px;font-size:9px;line-height:10.35px;color:#18243d;font-weight:normal;font-family:'Liberation Sans',sans-serif;transform:scale(0.896,1);transform-origin:0 0;-webkit-text-stroke:0.25px #18243d;">Healthy05.fcs</div>
<div class="t" style="right:888.10px;top:688.40px;font-size:9px;line-height:10.35px;color:#18243d;font-weight:normal;font-family:'Liberation Mono',monospace;transform:scale(0.889,1);transform-origin:100% 0;-webkit-text-stroke:0.15px #18243d;">1114090</div>
<div class="t" style="left:360.00px;top:687.20px;font-size:9px;line-height:10.35px;color:#18243d;font-weight:normal;font-family:'Liberation Sans',sans-serif;transform:scale(0.896,1);transform-origin:0 0;-webkit-text-stroke:0.25px #18243d;width:20px;overflow:hidden;">Healt</div>
<svg style="left:89.90px;top:709.16px" width="8" height="8" viewBox="0 0 8 8"><rect x="0" y="0" width="7" height="7.4" rx="0.6" fill="#262322"/><circle cx="1.45" cy="1.65" r="0.5" fill="#e8e8e8"/><circle cx="3.50" cy="1.65" r="0.5" fill="#e8e8e8"/><circle cx="5.55" cy="1.65" r="0.5" fill="#e8e8e8"/><circle cx="1.45" cy="3.70" r="0.5" fill="#e8e8e8"/><circle cx="3.50" cy="3.70" r="0.5" fill="#e8e8e8"/><circle cx="5.55" cy="3.70" r="0.5" fill="#e8e8e8"/><circle cx="1.45" cy="5.75" r="0.5" fill="#e8e8e8"/><circle cx="3.50" cy="5.75" r="0.5" fill="#e8e8e8"/><circle cx="5.55" cy="5.75" r="0.5" fill="#e8e8e8"/></svg>
<svg style="left:103.70px;top:709.56px" width="9" height="8" viewBox="0 0 9 8"><ellipse cx="2.1" cy="5.6" rx="1.6" ry="1.5" fill="none" stroke="#6f6a65" stroke-width="0.9"/><ellipse cx="5.8" cy="2.0" rx="1.6" ry="1.4" fill="none" stroke="#4f4a45" stroke-width="0.9"/><path d="M2.9 4.6 L4.9 2.9" stroke="#6f6a65" stroke-width="1.1"/></svg>
<div class="t" style="left:121.60px;top:707.72px;font-size:9px;line-height:10.35px;color:#18243d;font-weight:normal;font-family:'Liberation Sans',sans-serif;transform:scale(0.896,1);transform-origin:0 0;-webkit-text-stroke:0.25px #18243d;">Flu05.fcs</div>
<div class="t" style="right:888.10px;top:708.92px;font-size:9px;line-height:10.35px;color:#18243d;font-weight:normal;font-family:'Liberation Mono',monospace;transform:scale(0.889,1);transform-origin:100% 0;-webkit-text-stroke:0.15px #18243d;">591041</div>
<div class="t" style="left:360.00px;top:707.72px;font-size:9px;line-height:10.35px;color:#18243d;font-weight:normal;font-family:'Liberation Sans',sans-serif;transform:scale(0.896,1);transform-origin:0 0;-webkit-text-stroke:0.25px #18243d;width:20px;overflow:hidden;">Flu</div>
<svg style="left:89.90px;top:729.68px" width="8" height="8" viewBox="0 0 8 8"><rect x="0" y="0" width="7" height="7.4" rx="0.6" fill="#262322"/><circle cx="1.45" cy="1.65" r="0.5" fill="#e8e8e8"/><circle cx="3.50" cy="1.65" r="0.5" fill="#e8e8e8"/><circle cx="5.55" cy="1.65" r="0.5" fill="#e8e8e8"/><circle cx="1.45" cy="3.70" r="0.5" fill="#e8e8e8"/><circle cx="3.50" cy="3.70" r="0.5" fill="#e8e8e8"/><circle cx="5.55" cy="3.70" r="0.5" fill="#e8e8e8"/><circle cx="1.45" cy="5.75" r="0.5" fill="#e8e8e8"/><circle cx="3.50" cy="5.75" r="0.5" fill="#e8e8e8"/><circle cx="5.55" cy="5.75" r="0.5" fill="#e8e8e8"/></svg>
<svg style="left:103.70px;top:730.08px" width="9" height="8" viewBox="0 0 9 8"><ellipse cx="2.1" cy="5.6" rx="1.6" ry="1.5" fill="none" stroke="#6f6a65" stroke-width="0.9"/><ellipse cx="5.8" cy="2.0" rx="1.6" ry="1.4" fill="none" stroke="#4f4a45" stroke-width="0.9"/><path d="M2.9 4.6 L4.9 2.9" stroke="#6f6a65" stroke-width="1.1"/></svg>
<div class="t" style="left:121.60px;top:728.24px;font-size:9px;line-height:10.35px;color:#18243d;font-weight:normal;font-family:'Liberation Sans',sans-serif;transform:scale(0.896,1);transform-origin:0 0;-webkit-text-stroke:0.25px #18243d;">Flu01.fcs</div>
<div class="t" style="right:888.10px;top:729.44px;font-size:9px;line-height:10.35px;color:#18243d;font-weight:normal;font-family:'Liberation Mono',monospace;transform:scale(0.889,1);transform-origin:100% 0;-webkit-text-stroke:0.15px #18243d;">1635384</div>
<div class="t" style="left:360.00px;top:728.24px;font-size:9px;line-height:10.35px;color:#18243d;font-weight:normal;font-family:'Liberation Sans',sans-serif;transform:scale(0.896,1);transform-origin:0 0;-webkit-text-stroke:0.25px #18243d;width:20px;overflow:hidden;">Flu</div>
<svg style="left:89.90px;top:750.20px" width="8" height="8" viewBox="0 0 8 8"><rect x="0" y="0" width="7" height="7.4" rx="0.6" fill="#262322"/><circle cx="1.45" cy="1.65" r="0.5" fill="#e8e8e8"/><circle cx="3.50" cy="1.65" r="0.5" fill="#e8e8e8"/><circle cx="5.55" cy="1.65" r="0.5" fill="#e8e8e8"/><circle cx="1.45" cy="3.70" r="0.5" fill="#e8e8e8"/><circle cx="3.50" cy="3.70" r="0.5" fill="#e8e8e8"/><circle cx="5.55" cy="3.70" r="0.5" fill="#e8e8e8"/><circle cx="1.45" cy="5.75" r="0.5" fill="#e8e8e8"/><circle cx="3.50" cy="5.75" r="0.5" fill="#e8e8e8"/><circle cx="5.55" cy="5.75" r="0.5" fill="#e8e8e8"/></svg>
<svg style="left:103.70px;top:750.60px" width="9" height="8" viewBox="0 0 9 8"><ellipse cx="2.1" cy="5.6" rx="1.6" ry="1.5" fill="none" stroke="#6f6a65" stroke-width="0.9"/><ellipse cx="5.8" cy="2.0" rx="1.6" ry="1.4" fill="none" stroke="#4f4a45" stroke-width="0.9"/><path d="M2.9 4.6 L4.9 2.9" stroke="#6f6a65" stroke-width="1.1"/></svg>
<div class="t" style="left:121.60px;top:748.76px;font-size:9px;line-height:10.35px;color:#18243d;font-weight:normal;font-family:'Liberation Sans',sans-serif;transform:scale(0.896,1);transform-origin:0 0;-webkit-text-stroke:0.25px #18243d;">Flu02.fcs</div>
<div class="t" style="right:888.10px;top:749.96px;font-size:9px;line-height:10.35px;color:#18243d;font-weight:normal;font-family:'Liberation Mono',monospace;transform:scale(0.889,1);transform-origin:100% 0;-webkit-text-stroke:0.15px #18243d;">439985</div>
<div class="t" style="left:360.00px;top:748.76px;font-size:9px;line-height:10.35px;color:#18243d;font-weight:normal;font-family:'Liberation Sans',sans-serif;transform:scale(0.896,1);transform-origin:0 0;-webkit-text-stroke:0.25px #18243d;width:20px;overflow:hidden;">Flu</div>
<div class="a" style="left:79.10px;top:661.62px;width:299.30px;height:20.60px;border:2px solid #0f4a96;border-left-width:2.7px;border-right:none"></div>
<div class="a" style="left:215.40px;top:416.00px;width:4.20px;height:346.00px;background:linear-gradient(to right,rgba(0,0,0,0.22),rgba(0,0,0,0.10) 35%,rgba(0,0,0,0))"></div>
<div class="a" style="left:378.40px;top:447.00px;width:5.00px;height:265.00px;background:#d2cdc8;border-radius:2.5px"></div>
<div class="a" style="left:79.50px;top:762.00px;width:141.00px;height:6.00px;background:#d2cdc8;border-radius:3px"></div>
<div class="a" style="left:384.20px;top:54.00px;width:0.80px;height:714.00px;background:#d4d0cc"></div>
<div class="a" style="left:385.00px;top:54.00px;width:553.60px;height:27.60px;background:#e5e5e5"></div>
<div class="a" style="left:398.00px;top:60.60px;width:137.00px;height:21.20px;background:#f2f2f2;border-radius:4px 4px 0 0"></div>
<div class="a" style="left:398.00px;top:60.60px;width:137.00px;height:3.40px;background:#0d4ba0;border-radius:3px 3px 0 0"></div>
<div class="t" id="a22" style="left:405.20px;top:67.15px;font-size:10px;line-height:11.50px;color:#1f4f93;font-weight:normal;font-family:'Liberation Sans',sans-serif;transform:scale(0.9467,1);transform-origin:0 0;-webkit-text-stroke:0.15px #1f4f93;">Keywords</div>
<div class="a" style="left:542.00px;top:61.00px;width:136.60px;height:20.60px;background:#f0f0f0;border-radius:4px 4px 0 0"></div>
<div class="t" id="a23" style="left:548.70px;top:67.15px;font-size:10px;line-height:11.50px;color:#18243d;font-weight:normal;font-family:'Liberation Sans',sans-serif;transform:scale(0.9533,1);transform-origin:0 0;-webkit-text-stroke:0.25px #18243d;">Parameters</div>
<div class="a" style="left:685.50px;top:61.00px;width:136.20px;height:20.60px;background:#f0f0f0;border-radius:4px 4px 0 0"></div>
<div class="t" id="a24" style="left:692.20px;top:67.15px;font-size:10px;line-height:11.50px;color:#18243d;font-weight:normal;font-family:'Liberation Sans',sans-serif;transform:scale(0.9422,1);transform-origin:0 0;-webkit-text-stroke:0.25px #18243d;">Parameter Sets</div>
<div class="t" id="a25" style="left:391.70px;top:97.80px;font-size:9.5px;line-height:10.92px;color:#8a8784;font-weight:normal;font-family:'Liberation Sans',sans-serif;transform:scale(0.8488,1);transform-origin:0 0;">Select a group in the Analysis Tree to display keywords:</div>
<div class="t" id="a26" style="left:391.70px;top:107.10px;font-size:9.5px;line-height:10.92px;color:#1e4f95;font-weight:normal;font-family:'Liberation Sans',sans-serif;transform:scale(0.8637,1);transform-origin:0 0;-webkit-text-stroke:0.25px #1e4f95;">Experiment Data</div>
<div class="a" style="left:600.30px;top:96.50px;width:102.30px;height:20.30px;border:1px solid #8c8782;border-radius:3px;background:#f5f5f5"></div>
<div class="t" id="a27" style="left:609.10px;top:102.00px;font-size:9.5px;line-height:10.92px;color:#b9b6b3;font-weight:normal;font-family:'Liberation Sans',sans-serif;transform:scale(0.8899,1);transform-origin:0 0;">filter keywords</div>
<svg style="left:685.00px;top:100.00px" width="14" height="13" viewBox="0 0 14 13"><path d="M0.8 0.8 L13.2 0.8 L8.3 6.5 L8.3 12.3 L5.7 10.6 L5.7 6.5 Z" fill="none" stroke="#5a544e" stroke-width="1" stroke-linejoin="round"/></svg>
<div class="a" style="left:722.80px;top:99.30px;width:14.40px;height:14.40px;border:1px solid #5f5a55;border-radius:50%;background:#fff"></div>
<div class="t" id="a28" style="left:740.70px;top:102.20px;font-size:9.5px;line-height:10.92px;color:#7a7673;font-weight:normal;font-family:'Liberation Sans',sans-serif;transform:scale(0.8543,1);transform-origin:0 0;">Check within keyword values</div>
<div class="a" style="left:853.80px;top:99.30px;width:14.40px;height:14.40px;border:1px solid #5f5a55;border-radius:50%;background:#f7f7f7"></div>
<div class="a" style="left:855.80px;top:101.30px;width:10.40px;height:10.40px;background:#57504a;border-radius:50%"></div>
<div class="t" style="left:871.80px;top:102.20px;font-size:9.5px;line-height:10.92px;color:#7a7673;font-weight:normal;font-family:'Liberation Sans',sans-serif;transform:scale(0.846,1);transform-origin:0 0;">Check within keyw</div>
<div class="a" style="left:391.00px;top:132.00px;width:13.50px;height:13.60px;border:1px solid #77716c;border-radius:3px;background:#f7f7f7"></div>
<div class="t" id="a29" style="left:408.70px;top:132.90px;font-size:9.5px;line-height:10.92px;color:#8a8784;font-weight:normal;font-family:'Liberation Sans',sans-serif;transform:scale(0.8564,1);transform-origin:0 0;">Pivot keywords table</div>
<div class="a" style="left:385.00px;top:153.70px;width:553.60px;height:19.80px;background:#e6e6e6"></div>
<div class="a" style="left:385.00px;top:172.70px;width:553.60px;height:0.80px;background:#cfcbc7"></div>
<div class="a" style="left:385.00px;top:174.00px;width:553.60px;height:20.58px;background:#ffffff"></div>
<div class="a" style="left:385.00px;top:194.53px;width:553.60px;height:20.58px;background:#f1f1f1"></div>
<div class="a" style="left:385.00px;top:215.05px;width:553.60px;height:20.58px;background:#ffffff"></div>
<div class="a" style="left:385.00px;top:235.58px;width:553.60px;height:20.58px;background:#f1f1f1"></div>
<div class="a" style="left:385.00px;top:256.10px;width:553.60px;height:20.58px;background:#ffffff"></div>
<div class="a" style="left:385.00px;top:276.63px;width:553.60px;height:20.58px;background:#f1f1f1"></div>
<div class="a" style="left:385.00px;top:297.16px;width:553.60px;height:20.58px;background:#ffffff"></div>
<div class="a" style="left:385.00px;top:317.68px;width:553.60px;height:20.58px;background:#f1f1f1"></div>
<div class="a" style="left:385.00px;top:338.21px;width:553.60px;height:20.58px;background:#ffffff"></div>
<div class="a" style="left:385.00px;top:358.73px;width:553.60px;height:20.58px;background:#f1f1f1"></div>
<div class="a" style="left:385.00px;top:379.26px;width:553.60px;height:20.58px;background:#ffffff"></div>
<div class="a" style="left:385.00px;top:399.79px;width:553.60px;height:20.58px;background:#f1f1f1"></div>
<div class="a" style="left:385.00px;top:420.31px;width:553.60px;height:20.58px;background:#ffffff"></div>
<div class="a" style="left:385.00px;top:440.84px;width:553.60px;height:20.58px;background:#f1f1f1"></div>
<div class="a" style="left:385.00px;top:461.36px;width:553.60px;height:20.58px;background:#ffffff"></div>
<div class="a" style="left:385.00px;top:481.89px;width:553.60px;height:20.58px;background:#f1f1f1"></div>
<div class="a" style="left:385.00px;top:502.42px;width:553.60px;height:20.58px;background:#ffffff"></div>
<div class="a" style="left:385.00px;top:522.94px;width:553.60px;height:20.58px;background:#f1f1f1"></div>
<div class="a" style="left:385.00px;top:543.47px;width:553.60px;height:20.58px;background:#ffffff"></div>
<div class="a" style="left:385.00px;top:563.99px;width:553.60px;height:20.58px;background:#f1f1f1"></div>
<div class="a" style="left:385.00px;top:584.52px;width:553.60px;height:20.58px;background:#ffffff"></div>
<div class="a" style="left:385.00px;top:605.05px;width:553.60px;height:20.58px;background:#f1f1f1"></div>
<div class="a" style="left:385.00px;top:625.57px;width:553.60px;height:20.58px;background:#ffffff"></div>
<div class="a" style="left:385.00px;top:646.10px;width:553.60px;height:20.58px;background:#f1f1f1"></div>
<div class="a" style="left:385.00px;top:666.62px;width:553.60px;height:20.58px;background:#ffffff"></div>
<div class="a" style="left:385.00px;top:687.15px;width:553.60px;height:20.58px;background:#f1f1f1"></div>
<div class="a" style="left:385.00px;top:707.68px;width:553.60px;height:20.58px;background:#ffffff"></div>
<div class="a" style="left:385.00px;top:728.20px;width:553.60px;height:20.58px;background:#f1f1f1"></div>
<div class="a" style="left:385.00px;top:748.73px;width:553.60px;height:20.58px;background:#ffffff"></div>
<div class="t" style="left:391.80px;top:179.66px;font-size:9px;line-height:10.35px;color:#18243d;font-weight:normal;font-family:'Liberation Sans',sans-serif;transform:scale(0.905,1);transform-origin:0 0;-webkit-text-stroke:0.25px #18243d;">Covid01.fcs</div>
<div class="t" style="left:528.20px;top:179.66px;font-size:9px;line-height:10.35px;color:#18243d;font-weight:normal;font-family:'Liberation Sans',sans-serif;transform:scale(0.81,1);transform-origin:0 0;-webkit-text-stroke:0.25px #18243d;">TRUE</div>
<div class="t" style="left:664.80px;top:179.66px;font-size:9px;line-height:10.35px;color:#18243d;font-weight:normal;font-family:'Liberation Sans',sans-serif;transform:scale(0.905,1);transform-origin:0 0;-webkit-text-stroke:0.25px #18243d;">Sars-CoV-2</div>
<div class="t" style="left:802.00px;top:179.66px;font-size:9px;line-height:10.35px;color:#18243d;font-weight:normal;font-family:'Liberation Sans',sans-serif;transform:scale(0.905,1);transform-origin:0 0;-webkit-text-stroke:0.25px #18243d;">29-SEP-2020 09:56:02</div>
<div class="t" style="left:391.80px;top:200.18px;font-size:9px;line-height:10.35px;color:#18243d;font-weight:normal;font-family:'Liberation Sans',sans-serif;transform:scale(0.905,1);transform-origin:0 0;-webkit-text-stroke:0.25px #18243d;">Covid02.fcs</div>
<div class="t" style="left:528.20px;top:200.18px;font-size:9px;line-height:10.35px;color:#18243d;font-weight:normal;font-family:'Liberation Sans',sans-serif;transform:scale(0.81,1);transform-origin:0 0;-webkit-text-stroke:0.25px #18243d;">TRUE</div>
<div class="t" style="left:664.80px;top:200.18px;font-size:9px;line-height:10.35px;color:#18243d;font-weight:normal;font-family:'Liberation Sans',sans-serif;transform:scale(0.905,1);transform-origin:0 0;-webkit-text-stroke:0.25px #18243d;">Sars-CoV-2</div>
<div class="t" style="left:802.00px;top:200.18px;font-size:9px;line-height:10.35px;color:#18243d;font-weight:normal;font-family:'Liberation Sans',sans-serif;transform:scale(0.905,1);transform-origin:0 0;-webkit-text-stroke:0.25px #18243d;">29-SEP-2020 12:22:53</div>
<div class="t" style="left:391.80px;top:220.71px;font-size:9px;line-height:10.35px;color:#18243d;font-weight:normal;font-family:'Liberation Sans',sans-serif;transform:scale(0.905,1);transform-origin:0 0;-webkit-text-stroke:0.25px #18243d;">Covid03.fcs</div>
<div class="t" style="left:528.20px;top:220.71px;font-size:9px;line-height:10.35px;color:#18243d;font-weight:normal;font-family:'Liberation Sans',sans-serif;transform:scale(0.81,1);transform-origin:0 0;-webkit-text-stroke:0.25px #18243d;">TRUE</div>
<div class="t" style="left:664.80px;top:220.71px;font-size:9px;line-height:10.35px;color:#18243d;font-weight:normal;font-family:'Liberation Sans',sans-serif;transform:scale(0.905,1);transform-origin:0 0;-webkit-text-stroke:0.25px #18243d;">Sars-CoV-2</div>
<div class="t" style="left:802.00px;top:220.71px;font-size:9px;line-height:10.35px;color:#18243d;font-weight:normal;font-family:'Liberation Sans',sans-serif;transform:scale(0.905,1);transform-origin:0 0;-webkit-text-stroke:0.25px #18243d;">29-SEP-2020 12:25:54</div>
<div class="t" style="left:391.80px;top:241.23px;font-size:9px;line-height:10.35px;color:#18243d;font-weight:normal;font-family:'Liberation Sans',sans-serif;transform:scale(0.905,1);transform-origin:0 0;-webkit-text-stroke:0.25px #18243d;">Covid04.fcs</div>
<div class="t" style="left:528.20px;top:241.23px;font-size:9px;line-height:10.35px;color:#18243d;font-weight:normal;font-family:'Liberation Sans',sans-serif;transform:scale(0.81,1);transform-origin:0 0;-webkit-text-stroke:0.25px #18243d;">TRUE</div>
<div class="t" style="left:664.80px;top:241.23px;font-size:9px;line-height:10.35px;color:#18243d;font-weight:normal;font-family:'Liberation Sans',sans-serif;transform:scale(0.905,1);transform-origin:0 0;-webkit-text-stroke:0.25px #18243d;">Sars-CoV-2</div>
<div class="t" style="left:802.00px;top:241.23px;font-size:9px;line-height:10.35px;color:#18243d;font-weight:normal;font-family:'Liberation Sans',sans-serif;transform:scale(0.905,1);transform-origin:0 0;-webkit-text-stroke:0.25px #18243d;">29-SEP-2020 10:08:09</div>
<div class="t" style="left:391.80px;top:261.76px;font-size:9px;line-height:10.35px;color:#18243d;font-weight:normal;font-family:'Liberation Sans',sans-serif;transform:scale(0.905,1);transform-origin:0 0;-webkit-text-stroke:0.25px #18243d;">Covid05.fcs</div>
<div class="t" style="left:528.20px;top:261.76px;font-size:9px;line-height:10.35px;color:#18243d;font-weight:normal;font-family:'Liberation Sans',sans-serif;transform:scale(0.81,1);transform-origin:0 0;-webkit-text-stroke:0.25px #18243d;">TRUE</div>
<div class="t" style="left:664.80px;top:261.76px;font-size:9px;line-height:10.35px;color:#18243d;font-weight:normal;font-family:'Liberation Sans',sans-serif;transform:scale(0.905,1);transform-origin:0 0;-webkit-text-stroke:0.25px #18243d;">Sars-CoV-2</div>
<div class="t" style="left:802.00px;top:261.76px;font-size:9px;line-height:10.35px;color:#18243d;font-weight:normal;font-family:'Liberation Sans',sans-serif;transform:scale(0.905,1);transform-origin:0 0;-webkit-text-stroke:0.25px #18243d;">29-SEP-2020 10:23:18</div>
<div class="t" style="left:391.80px;top:282.29px;font-size:9px;line-height:10.35px;color:#18243d;font-weight:normal;font-family:'Liberation Sans',sans-serif;transform:scale(0.905,1);transform-origin:0 0;-webkit-text-stroke:0.25px #18243d;">Flu01.fcs</div>
<div class="t" style="left:528.20px;top:282.29px;font-size:9px;line-height:10.35px;color:#18243d;font-weight:normal;font-family:'Liberation Sans',sans-serif;transform:scale(0.81,1);transform-origin:0 0;-webkit-text-stroke:0.25px #18243d;">TRUE</div>
<div class="t" style="left:664.80px;top:282.29px;font-size:9px;line-height:10.35px;color:#18243d;font-weight:normal;font-family:'Liberation Sans',sans-serif;transform:scale(0.905,1);transform-origin:0 0;-webkit-text-stroke:0.25px #18243d;">Flu</div>
<div class="t" style="left:802.00px;top:282.29px;font-size:9px;line-height:10.35px;color:#18243d;font-weight:normal;font-family:'Liberation Sans',sans-serif;transform:scale(0.905,1);transform-origin:0 0;-webkit-text-stroke:0.25px #18243d;">29-SEP-2020 10:11:12</div>
<div class="t" style="left:391.80px;top:302.81px;font-size:9px;line-height:10.35px;color:#18243d;font-weight:normal;font-family:'Liberation Sans',sans-serif;transform:scale(0.905,1);transform-origin:0 0;-webkit-text-stroke:0.25px #18243d;">Flu02.fcs</div>
<div class="t" style="left:528.20px;top:302.81px;font-size:9px;line-height:10.35px;color:#18243d;font-weight:normal;font-family:'Liberation Sans',sans-serif;transform:scale(0.81,1);transform-origin:0 0;-webkit-text-stroke:0.25px #18243d;">TRUE</div>
<div class="t" style="left:664.80px;top:302.81px;font-size:9px;line-height:10.35px;color:#18243d;font-weight:normal;font-family:'Liberation Sans',sans-serif;transform:scale(0.905,1);transform-origin:0 0;-webkit-text-stroke:0.25px #18243d;">Flu</div>
<div class="t" style="left:802.00px;top:302.81px;font-size:9px;line-height:10.35px;color:#18243d;font-weight:normal;font-family:'Liberation Sans',sans-serif;transform:scale(0.905,1);transform-origin:0 0;-webkit-text-stroke:0.25px #18243d;">29-SEP-2020 10:26:21</div>
<div class="t" style="left:391.80px;top:323.34px;font-size:9px;line-height:10.35px;color:#18243d;font-weight:normal;font-family:'Liberation Sans',sans-serif;transform:scale(0.905,1);transform-origin:0 0;-webkit-text-stroke:0.25px #18243d;">Flu03.fcs</div>
<div class="t" style="left:528.20px;top:323.34px;font-size:9px;line-height:10.35px;color:#18243d;font-weight:normal;font-family:'Liberation Sans',sans-serif;transform:scale(0.81,1);transform-origin:0 0;-webkit-text-stroke:0.25px #18243d;">TRUE</div>
<div class="t" style="left:664.80px;top:323.34px;font-size:9px;line-height:10.35px;color:#18243d;font-weight:normal;font-family:'Liberation Sans',sans-serif;transform:scale(0.905,1);transform-origin:0 0;-webkit-text-stroke:0.25px #18243d;">Flu</div>
<div class="t" style="left:802.00px;top:323.34px;font-size:9px;line-height:10.35px;color:#18243d;font-weight:normal;font-family:'Liberation Sans',sans-serif;transform:scale(0.905,1);transform-origin:0 0;-webkit-text-stroke:0.25px #18243d;">29-SEP-2020 10:41:31</div>
<div class="t" style="left:391.80px;top:343.86px;font-size:9px;line-height:10.35px;color:#18243d;font-weight:normal;font-family:'Liberation Sans',sans-serif;transform:scale(0.905,1);transform-origin:0 0;-webkit-text-stroke:0.25px #18243d;">Flu04.fcs</div>
<div class="t" style="left:528.20px;top:343.86px;font-size:9px;line-height:10.35px;color:#18243d;font-weight:normal;font-family:'Liberation Sans',sans-serif;transform:scale(0.81,1);transform-origin:0 0;-webkit-text-stroke:0.25px #18243d;">TRUE</div>
<div class="t" style="left:664.80px;top:343.86px;font-size:9px;line-height:10.35px;color:#18243d;font-weight:normal;font-family:'Liberation Sans',sans-serif;transform:scale(0.905,1);transform-origin:0 0;-webkit-text-stroke:0.25px #18243d;">Flu</div>
<div class="t" style="left:802.00px;top:343.86px;font-size:9px;line-height:10.35px;color:#18243d;font-weight:normal;font-family:'Liberation Sans',sans-serif;transform:scale(0.905,1);transform-origin:0 0;-webkit-text-stroke:0.25px #18243d;">29-SEP-2020 11:11:52</div>
<div class="t" style="left:391.80px;top:364.39px;font-size:9px;line-height:10.35px;color:#18243d;font-weight:normal;font-family:'Liberation Sans',sans-serif;transform:scale(0.905,1);transform-origin:0 0;-webkit-text-stroke:0.25px #18243d;">Flu05.fcs</div>
<div class="t" style="left:528.20px;top:364.39px;font-size:9px;line-height:10.35px;color:#18243d;font-weight:normal;font-family:'Liberation Sans',sans-serif;transform:scale(0.81,1);transform-origin:0 0;-webkit-text-stroke:0.25px #18243d;">TRUE</div>
<div class="t" style="left:664.80px;top:364.39px;font-size:9px;line-height:10.35px;color:#18243d;font-weight:normal;font-family:'Liberation Sans',sans-serif;transform:scale(0.905,1);transform-origin:0 0;-webkit-text-stroke:0.25px #18243d;">Flu</div>
<div class="t" style="left:802.00px;top:364.39px;font-size:9px;line-height:10.35px;color:#18243d;font-weight:normal;font-family:'Liberation Sans',sans-serif;transform:scale(0.905,1);transform-origin:0 0;-webkit-text-stroke:0.25px #18243d;">29-SEP-2020 11:42:12</div>
<div class="t" style="left:391.80px;top:384.92px;font-size:9px;line-height:10.35px;color:#18243d;font-weight:normal;font-family:'Liberation Sans',sans-serif;transform:scale(0.905,1);transform-origin:0 0;-webkit-text-stroke:0.25px #18243d;">Healthy01.fcs</div>
<div class="t" style="left:528.20px;top:384.92px;font-size:9px;line-height:10.35px;color:#18243d;font-weight:normal;font-family:'Liberation Sans',sans-serif;transform:scale(0.81,1);transform-origin:0 0;-webkit-text-stroke:0.25px #18243d;">TRUE</div>
<div class="t" style="left:664.80px;top:384.92px;font-size:9px;line-height:10.35px;color:#18243d;font-weight:normal;font-family:'Liberation Sans',sans-serif;transform:scale(0.905,1);transform-origin:0 0;-webkit-text-stroke:0.25px #18243d;">Healthy</div>
<div class="t" style="left:802.00px;top:384.92px;font-size:9px;line-height:10.35px;color:#18243d;font-weight:normal;font-family:'Liberation Sans',sans-serif;transform:scale(0.905,1);transform-origin:0 0;-webkit-text-stroke:0.25px #18243d;">29-SEP-2020 09:59:03</div>
<div class="t" style="left:391.80px;top:405.44px;font-size:9px;line-height:10.35px;color:#18243d;font-weight:normal;font-family:'Liberation Sans',sans-serif;transform:scale(0.905,1);transform-origin:0 0;-webkit-text-stroke:0.25px #18243d;">Healthy02.fcs</div>
<div class="t" style="left:528.20px;top:405.44px;font-size:9px;line-height:10.35px;color:#18243d;font-weight:normal;font-family:'Liberation Sans',sans-serif;transform:scale(0.81,1);transform-origin:0 0;-webkit-text-stroke:0.25px #18243d;">TRUE</div>
<div class="t" style="left:664.80px;top:405.44px;font-size:9px;line-height:10.35px;color:#18243d;font-weight:normal;font-family:'Liberation Sans',sans-serif;transform:scale(0.905,1);transform-origin:0 0;-webkit-text-stroke:0.25px #18243d;">Healthy</div>
<div class="t" style="left:802.00px;top:405.44px;font-size:9px;line-height:10.35px;color:#18243d;font-weight:normal;font-family:'Liberation Sans',sans-serif;transform:scale(0.905,1);transform-origin:0 0;-webkit-text-stroke:0.25px #18243d;">29-SEP-2020 10:29:24</div>
<div class="t" style="left:391.80px;top:425.97px;font-size:9px;line-height:10.35px;color:#18243d;font-weight:normal;font-family:'Liberation Sans',sans-serif;transform:scale(0.905,1);transform-origin:0 0;-webkit-text-stroke:0.25px #18243d;">Healthy03.fcs</div>
<div class="t" style="left:528.20px;top:425.97px;font-size:9px;line-height:10.35px;color:#18243d;font-weight:normal;font-family:'Liberation Sans',sans-serif;transform:scale(0.81,1);transform-origin:0 0;-webkit-text-stroke:0.25px #18243d;">TRUE</div>
<div class="t" style="left:664.80px;top:425.97px;font-size:9px;line-height:10.35px;color:#18243d;font-weight:normal;font-family:'Liberation Sans',sans-serif;transform:scale(0.905,1);transform-origin:0 0;-webkit-text-stroke:0.25px #18243d;">Healthy</div>
<div class="t" style="left:802.00px;top:425.97px;font-size:9px;line-height:10.35px;color:#18243d;font-weight:normal;font-family:'Liberation Sans',sans-serif;transform:scale(0.905,1);transform-origin:0 0;-webkit-text-stroke:0.25px #18243d;">29-SEP-2020 10:14:13</div>
<div class="t" style="left:391.80px;top:446.49px;font-size:9px;line-height:10.35px;color:#18243d;font-weight:normal;font-family:'Liberation Sans',sans-serif;transform:scale(0.905,1);transform-origin:0 0;-webkit-text-stroke:0.25px #18243d;">Healthy04.fcs</div>
<div class="t" style="left:528.20px;top:446.49px;font-size:9px;line-height:10.35px;color:#18243d;font-weight:normal;font-family:'Liberation Sans',sans-serif;transform:scale(0.81,1);transform-origin:0 0;-webkit-text-stroke:0.25px #18243d;">TRUE</div>
<div class="t" style="left:664.80px;top:446.49px;font-size:9px;line-height:10.35px;color:#18243d;font-weight:normal;font-family:'Liberation Sans',sans-serif;transform:scale(0.905,1);transform-origin:0 0;-webkit-text-stroke:0.25px #18243d;">Healthy</div>
<div class="t" style="left:802.00px;top:446.49px;font-size:9px;line-height:10.35px;color:#18243d;font-weight:normal;font-family:'Liberation Sans',sans-serif;transform:scale(0.905,1);transform-origin:0 0;-webkit-text-stroke:0.25px #18243d;">29-SEP-2020 10:17:15</div>
<div class="t" style="left:391.80px;top:467.02px;font-size:9px;line-height:10.35px;color:#18243d;font-weight:normal;font-family:'Liberation Sans',sans-serif;transform:scale(0.905,1);transform-origin:0 0;-webkit-text-stroke:0.25px #18243d;">Healthy05.fcs</div>
<div class="t" style="left:528.20px;top:467.02px;font-size:9px;line-height:10.35px;color:#18243d;font-weight:normal;font-family:'Liberation Sans',sans-serif;transform:scale(0.81,1);transform-origin:0 0;-webkit-text-stroke:0.25px #18243d;">TRUE</div>
<div class="t" style="left:664.80px;top:467.02px;font-size:9px;line-height:10.35px;color:#18243d;font-weight:normal;font-family:'Liberation Sans',sans-serif;transform:scale(0.905,1);transform-origin:0 0;-webkit-text-stroke:0.25px #18243d;">Healthy</div>
<div class="t" style="left:802.00px;top:467.02px;font-size:9px;line-height:10.35px;color:#18243d;font-weight:normal;font-family:'Liberation Sans',sans-serif;transform:scale(0.905,1);transform-origin:0 0;-webkit-text-stroke:0.25px #18243d;">29-SEP-2020 10:29:24</div>
<div class="t" style="left:391.80px;top:487.55px;font-size:9px;line-height:10.35px;color:#18243d;font-weight:normal;font-family:'Liberation Sans',sans-serif;transform:scale(0.905,1);transform-origin:0 0;-webkit-text-stroke:0.25px #18243d;">RSV01.fcs</div>
<div class="t" style="left:528.20px;top:487.55px;font-size:9px;line-height:10.35px;color:#18243d;font-weight:normal;font-family:'Liberation Sans',sans-serif;transform:scale(0.81,1);transform-origin:0 0;-webkit-text-stroke:0.25px #18243d;">TRUE</div>
<div class="t" style="left:664.80px;top:487.55px;font-size:9px;line-height:10.35px;color:#18243d;font-weight:normal;font-family:'Liberation Sans',sans-serif;transform:scale(0.905,1);transform-origin:0 0;-webkit-text-stroke:0.25px #18243d;">RSV</div>
<div class="t" style="left:802.00px;top:487.55px;font-size:9px;line-height:10.35px;color:#18243d;font-weight:normal;font-family:'Liberation Sans',sans-serif;transform:scale(0.905,1);transform-origin:0 0;-webkit-text-stroke:0.25px #18243d;">29-SEP-2020 10:05:06</div>
<div class="t" style="left:391.80px;top:508.07px;font-size:9px;line-height:10.35px;color:#18243d;font-weight:normal;font-family:'Liberation Sans',sans-serif;transform:scale(0.905,1);transform-origin:0 0;-webkit-text-stroke:0.25px #18243d;">RSV02.fcs</div>
<div class="t" style="left:528.20px;top:508.07px;font-size:9px;line-height:10.35px;color:#18243d;font-weight:normal;font-family:'Liberation Sans',sans-serif;transform:scale(0.81,1);transform-origin:0 0;-webkit-text-stroke:0.25px #18243d;">TRUE</div>
<div class="t" style="left:664.80px;top:508.07px;font-size:9px;line-height:10.35px;color:#18243d;font-weight:normal;font-family:'Liberation Sans',sans-serif;transform:scale(0.905,1);transform-origin:0 0;-webkit-text-stroke:0.25px #18243d;">RSV</div>
<div class="t" style="left:802.00px;top:508.07px;font-size:9px;line-height:10.35px;color:#18243d;font-weight:normal;font-family:'Liberation Sans',sans-serif;transform:scale(0.905,1);transform-origin:0 0;-webkit-text-stroke:0.25px #18243d;">29-SEP-2020 10:20:16</div>
<div class="t" style="left:391.80px;top:528.60px;font-size:9px;line-height:10.35px;color:#18243d;font-weight:normal;font-family:'Liberation Sans',sans-serif;transform:scale(0.905,1);transform-origin:0 0;-webkit-text-stroke:0.25px #18243d;">RSV03.fcs</div>
<div class="t" style="left:528.20px;top:528.60px;font-size:9px;line-height:10.35px;color:#18243d;font-weight:normal;font-family:'Liberation Sans',sans-serif;transform:scale(0.81,1);transform-origin:0 0;-webkit-text-stroke:0.25px #18243d;">TRUE</div>
<div class="t" style="left:664.80px;top:528.60px;font-size:9px;line-height:10.35px;color:#18243d;font-weight:normal;font-family:'Liberation Sans',sans-serif;transform:scale(0.905,1);transform-origin:0 0;-webkit-text-stroke:0.25px #18243d;">RSV</div>
<div class="t" style="left:802.00px;top:528.60px;font-size:9px;line-height:10.35px;color:#18243d;font-weight:normal;font-family:'Liberation Sans',sans-serif;transform:scale(0.905,1);transform-origin:0 0;-webkit-text-stroke:0.25px #18243d;">29-SEP-2020 10:35:27</div>
<div class="t" style="left:391.80px;top:549.12px;font-size:9px;line-height:10.35px;color:#18243d;font-weight:normal;font-family:'Liberation Sans',sans-serif;transform:scale(0.905,1);transform-origin:0 0;-webkit-text-stroke:0.25px #18243d;">RSV04.fcs</div>
<div class="t" style="left:528.20px;top:549.12px;font-size:9px;line-height:10.35px;color:#18243d;font-weight:normal;font-family:'Liberation Sans',sans-serif;transform:scale(0.81,1);transform-origin:0 0;-webkit-text-stroke:0.25px #18243d;">TRUE</div>
<div class="t" style="left:664.80px;top:549.12px;font-size:9px;line-height:10.35px;color:#18243d;font-weight:normal;font-family:'Liberation Sans',sans-serif;transform:scale(0.905,1);transform-origin:0 0;-webkit-text-stroke:0.25px #18243d;">RSV</div>
<div class="t" style="left:802.00px;top:549.12px;font-size:9px;line-height:10.35px;color:#18243d;font-weight:normal;font-family:'Liberation Sans',sans-serif;transform:scale(0.905,1);transform-origin:0 0;-webkit-text-stroke:0.25px #18243d;">29-SEP-2020 11:05:49</div>
<div class="t" style="left:391.80px;top:569.65px;font-size:9px;line-height:10.35px;color:#18243d;font-weight:normal;font-family:'Liberation Sans',sans-serif;transform:scale(0.905,1);transform-origin:0 0;-webkit-text-stroke:0.25px #18243d;">RSV05.fcs</div>
<div class="t" style="left:528.20px;top:569.65px;font-size:9px;line-height:10.35px;color:#18243d;font-weight:normal;font-family:'Liberation Sans',sans-serif;transform:scale(0.81,1);transform-origin:0 0;-webkit-text-stroke:0.25px #18243d;">TRUE</div>
<div class="t" style="left:664.80px;top:569.65px;font-size:9px;line-height:10.35px;color:#18243d;font-weight:normal;font-family:'Liberation Sans',sans-serif;transform:scale(0.905,1);transform-origin:0 0;-webkit-text-stroke:0.25px #18243d;">RSV</div>
<div class="t" style="left:802.00px;top:569.65px;font-size:9px;line-height:10.35px;color:#18243d;font-weight:normal;font-family:'Liberation Sans',sans-serif;transform:scale(0.905,1);transform-origin:0 0;-webkit-text-stroke:0.25px #18243d;">29-SEP-2020 11:20:58</div>
<div class="t" id="a30" style="left:391.70px;top:159.84px;font-size:9.9px;line-height:11.38px;color:#4f4a45;font-weight:normal;font-family:'Liberation Sans',sans-serif;transform:scale(0.8535,1);transform-origin:0 0;-webkit-text-stroke:0.22px #4f4a45;text-rendering:geometricPrecision;">Sample Name</div>
<svg style="left:510.60px;top:159.00px" width="8" height="10" viewBox="0 0 8 10"><path d="M0.3 4 L3.75 0.2 L7.2 4 Z" fill="#1f7cf2"/><path d="M0.3 5.3 L3.75 9.1 L7.2 5.3 Z" fill="#57524d"/></svg>
<div class="t" id="a31" style="left:528.40px;top:159.84px;font-size:9.9px;line-height:11.38px;color:#4f4a45;font-weight:normal;font-family:'Liberation Sans',sans-serif;transform:scale(0.7995,1);transform-origin:0 0;-webkit-text-stroke:0.22px #4f4a45;text-rendering:geometricPrecision;">APPLY COMPENSATION</div>
<svg style="left:646.90px;top:159.00px" width="8" height="10" viewBox="0 0 8 10"><path d="M0.3 4 L3.75 0.2 L7.2 4 Z" fill="#57524d"/><path d="M0.3 5.3 L3.75 9.1 L7.2 5.3 Z" fill="#57524d"/></svg>
<div class="t" id="a32" style="left:664.80px;top:159.84px;font-size:9.9px;line-height:11.38px;color:#4f4a45;font-weight:normal;font-family:'Liberation Sans',sans-serif;transform:scale(0.8825,1);transform-origin:0 0;-webkit-text-stroke:0.22px #4f4a45;text-rendering:geometricPrecision;">Condition</div>
<svg style="left:784.20px;top:159.00px" width="8" height="10" viewBox="0 0 8 10"><path d="M0.3 4 L3.75 0.2 L7.2 4 Z" fill="#57524d"/><path d="M0.3 5.3 L3.75 9.1 L7.2 5.3 Z" fill="#57524d"/></svg>
<div class="t" id="a33" style="left:802.10px;top:159.84px;font-size:9.9px;line-height:11.38px;color:#4f4a45;font-weight:normal;font-family:'Liberation Sans',sans-serif;transform:scale(0.8802,1);transform-origin:0 0;-webkit-text-stroke:0.22px #4f4a45;text-rendering:geometricPrecision;">Collection Time</div>
<svg style="left:921.00px;top:159.00px" width="8" height="10" viewBox="0 0 8 10"><path d="M0.3 4 L3.75 0.2 L7.2 4 Z" fill="#57524d"/><path d="M0.3 5.3 L3.75 9.1 L7.2 5.3 Z" fill="#57524d"/></svg>
<div class="a" style="left:657.00px;top:153.70px;width:0.80px;height:608.30px;background:#d8d4d0"></div>
<div class="a" style="left:794.20px;top:153.70px;width:0.80px;height:608.30px;background:#d8d4d0"></div>
<div class="a" style="left:930.80px;top:153.70px;width:0.80px;height:608.30px;background:#cbc7c3"></div>
<div class="a" style="left:520.90px;top:153.70px;width:4.20px;height:608.30px;background:linear-gradient(to right,rgba(0,0,0,0.22),rgba(0,0,0,0.10) 35%,rgba(0,0,0,0))"></div>
<div class="a" style="left:385.00px;top:762.00px;width:553.60px;height:6.00px;background:#f2f2f2"></div>
<div class="a" style="left:384.50px;top:762.20px;width:30.20px;height:5.40px;background:#d2cdc8;border-radius:2.7px"></div>
<div class="a" style="left:938.60px;top:54.00px;width:0.80px;height:714.00px;background:#e2deda"></div>
<div class="t" id="a34" style="left:953.00px;top:60.70px;font-size:9.5px;line-height:10.92px;color:#18243d;font-weight:normal;font-family:'Liberation Sans',sans-serif;transform:scale(0.8838,1);transform-origin:0 0;-webkit-text-stroke:0.25px #18243d;">Add a new keyword to facilitate organization of your</div>
<div class="t" id="a35" style="left:953.00px;top:70.10px;font-size:9.5px;line-height:10.92px;color:#18243d;font-weight:normal;font-family:'Liberation Sans',sans-serif;transform:scale(0.8819,1);transform-origin:0 0;-webkit-text-stroke:0.25px #18243d;">workspace. Add content via a uniform value.</div>
<div class="t" id="a36" style="left:953.40px;top:86.40px;font-size:9.5px;line-height:10.92px;color:#8a8784;font-weight:normal;font-family:'Liberation Sans',sans-serif;transform:scale(0.8552,1);transform-origin:0 0;">Enter keyword name</div>
<div class="a" style="left:953.00px;top:100.00px;width:192.00px;height:20.80px;border:1px solid #5c5651;border-radius:2.5px;background:#fff"></div>
<div class="t" id="a37" style="left:960.90px;top:105.36px;font-size:9px;line-height:10.35px;color:#18243d;font-weight:normal;font-family:'Liberation Sans',sans-serif;transform:scale(0.9338,1);transform-origin:0 0;-webkit-text-stroke:0.25px #18243d;">Project</div>
<div class="t" id="a38" style="left:953.40px;top:143.40px;font-size:9.5px;line-height:10.92px;color:#8a8784;font-weight:normal;font-family:'Liberation Sans',sans-serif;transform:scale(0.8595,1);transform-origin:0 0;">Add uniform value</div>
<div class="a" style="left:953.00px;top:158.00px;width:192.00px;height:20.20px;border:1px solid #5c5651;border-radius:2.5px;background:#fff"></div>
<div class="t" id="a39" style="left:960.90px;top:163.05px;font-size:9px;line-height:10.35px;color:#18243d;font-weight:normal;font-family:'Liberation Sans',sans-serif;transform:scale(0.9064,1);transform-origin:0 0;-webkit-text-stroke:0.25px #18243d;">Respiratory Disease</div>
<div class="a" style="left:1076.20px;top:202.50px;width:68.20px;height:20.20px;border:1px solid #7d7873;border-radius:3px;background:#f4f4f4"></div>
<div class="t" id="a40" style="left:1085.80px;top:206.80px;font-size:9.5px;line-height:10.92px;color:#4a4540;font-weight:normal;font-family:'Liberation Sans',sans-serif;transform:scale(0.8763,1);transform-origin:0 0;-webkit-text-stroke:0.1px #4a4540;">Add Keyword</div>
<div class="a" style="left:940.20px;top:231.00px;width:217.10px;height:108.70px;border:6px solid #fe6f00;box-shadow:inset 2px 2px 5px rgba(0,0,0,0.35),2px 3px 5px rgba(0,0,0,0.35);"></div>
<div class="t" id="a41" style="left:953.10px;top:250.00px;font-size:9.5px;line-height:10.92px;color:#8a8784;font-weight:normal;font-family:'Liberation Sans',sans-serif;transform:scale(0.8579,1);transform-origin:0 0;">Select a keyword to map by</div>
<div class="a" style="left:953.40px;top:264.30px;width:191.10px;height:19.70px;border:1px solid #77716c;border-radius:4px;background:#fff"></div>
<div class="t" id="a42" style="left:960.40px;top:268.96px;font-size:9px;line-height:10.35px;color:#18243d;font-weight:normal;font-family:'Liberation Sans',sans-serif;transform:scale(0.9302,1);transform-origin:0 0;-webkit-text-stroke:0.25px #18243d;">$FIL</div>
<svg style="left:1114.50px;top:270.50px" width="7" height="7" viewBox="0 0 7 7"><path d="M0.8 0.8 L6.2 6.2 M6.2 0.8 L0.8 6.2" stroke="#6b6661" stroke-width="0.9"/></svg>
<svg style="left:1124.50px;top:267.50px" width="14" height="14" viewBox="0 0 14 14"><circle cx="6.5" cy="6.5" r="6" fill="none" stroke="#5a544e" stroke-width="0.9"/><path d="M3.5 5.3 L6.5 8.3 L9.5 5.3" fill="none" stroke="#5a544e" stroke-width="0.9"/></svg>
<div class="a" style="left:1076.20px;top:305.50px;width:68.20px;height:20.00px;border:1px solid #7d7873;border-radius:3px;background:#f4f4f4"></div>
<div class="t" id="a43" style="left:1079.00px;top:310.90px;font-size:9.5px;line-height:10.92px;color:#4a4540;font-weight:normal;font-family:'Liberation Sans',sans-serif;transform:scale(0.8800,1);transform-origin:0 0;-webkit-text-stroke:0.1px #4a4540;">Import Keywords</div>
<div class="t" id="a44" style="left:953.50px;top:346.60px;font-size:9.5px;line-height:10.92px;color:#18243d;font-weight:normal;font-family:'Liberation Sans',sans-serif;transform:scale(0.8752,1);transform-origin:0 0;-webkit-text-stroke:0.25px #18243d;">FlowJo Tables can be used to select and export</div>
<div class="t" id="a45" style="left:953.50px;top:356.20px;font-size:9.5px;line-height:10.92px;color:#18243d;font-weight:normal;font-family:'Liberation Sans',sans-serif;transform:scale(0.8665,1);transform-origin:0 0;-webkit-text-stroke:0.25px #18243d;">keywords to a .CSV file to get started.</div>
<div class="a" style="left:1158.10px;top:54.00px;width:0.80px;height:714.00px;background:#d6d2ce"></div>
<svg style="left:1169.00px;top:63.30px" width="8" height="10" viewBox="0 0 8 10"><rect x="0" y="0" width="1.7" height="9.4" fill="#514b45"/><rect x="2.85" y="0" width="1.7" height="9.4" fill="#514b45"/><rect x="5.7" y="0" width="1.7" height="9.4" fill="#514b45"/></svg>
<div class="a" style="left:1159.40px;top:81.80px;width:26.60px;height:26.80px;background:#e6e8eb"></div>
<svg style="left:1165.50px;top:87.50px" width="16" height="17" viewBox="0 0 16 17"><path d="M0.2 7.9 L6 7.9 M3.1 5 L3.1 10.8" stroke="#2c67b0" stroke-width="0.95"/><path d="M9 6.6 A3.8 3.8 0 1 1 12.4 6.6 L12.4 8 L13 8.7 L12.4 9.6 L13 10.5 L12.4 11.4 L13 12.3 L12.4 13.2 L10.7 15 L9 13.2 Z" fill="none" stroke="#2c67b0" stroke-width="0.95" stroke-linejoin="round"/><path d="M9.9 1.6 L11.5 1.6 L11.3 3.6 L10.1 3.6 Z" fill="#2c67b0"/></svg>
</div></body></html>
